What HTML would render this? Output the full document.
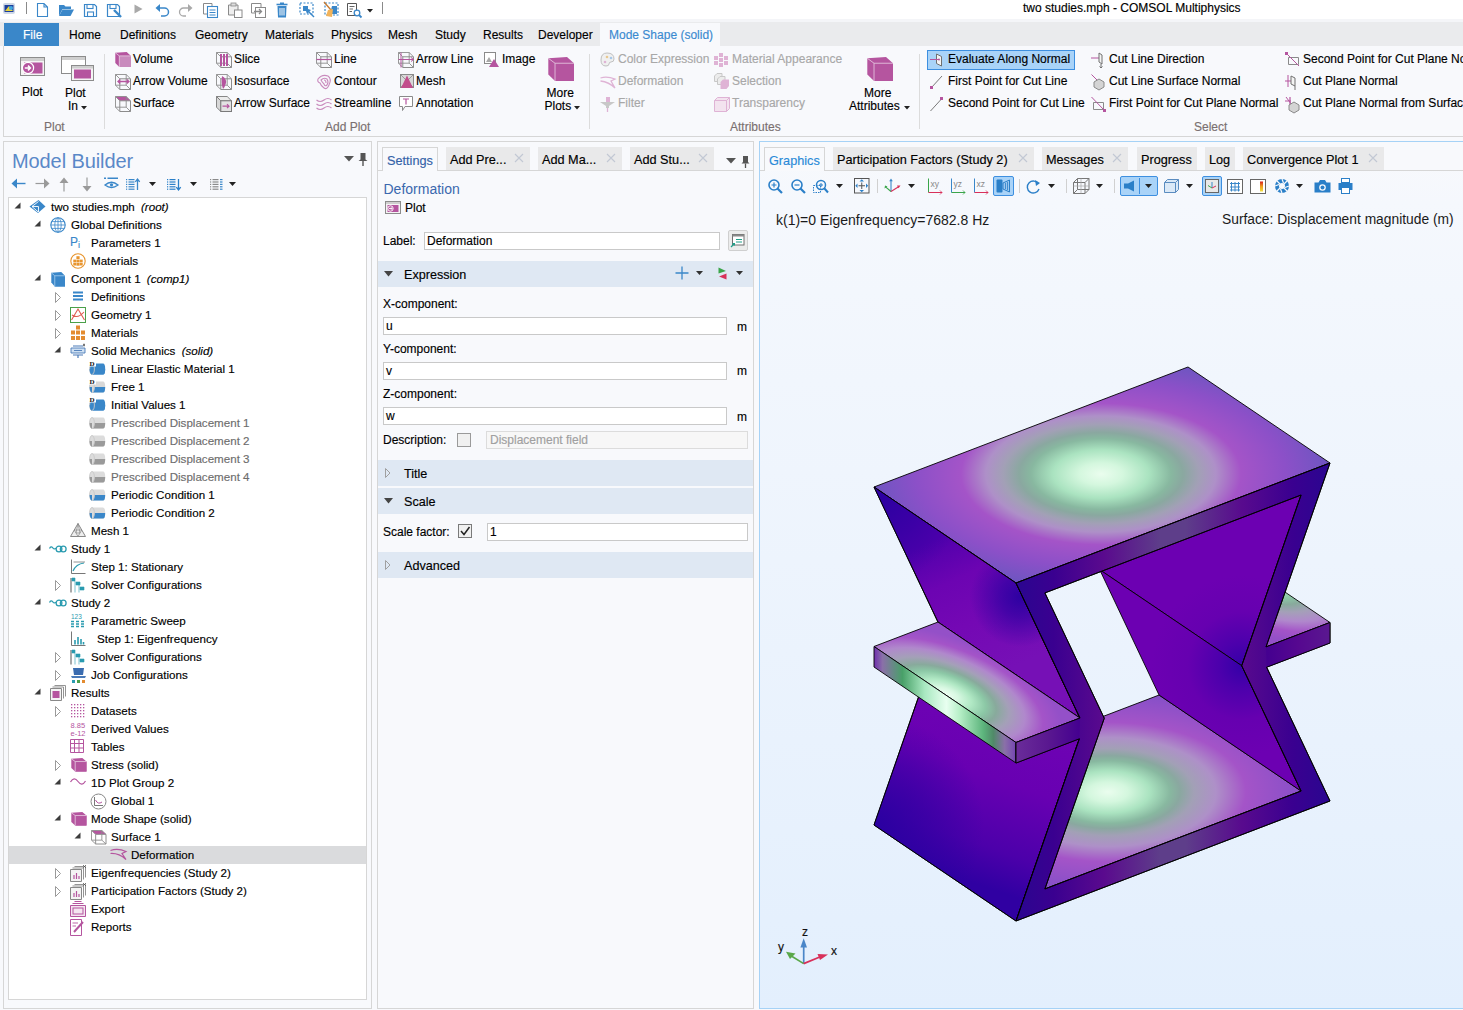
<!DOCTYPE html>
<html><head><meta charset="utf-8"><title>two studies.mph - COMSOL Multiphysics</title>
<style>
html,body{margin:0;padding:0;width:1463px;height:1010px;overflow:hidden;background:#f8f9fc;font-family:"Liberation Sans",sans-serif;font-size:12px;color:#000;}
.a{position:absolute;white-space:nowrap;line-height:1;-webkit-text-stroke:0.15px currentColor;}
svg.a{overflow:visible;}
</style></head><body>

<div class="a" style="left:0px;top:0px;width:1463px;height:19px;background:#ffffff"></div>
<svg class="a" style="left:2px;top:2px;" width="14" height="13" viewBox="0 0 14 13"><rect x="1" y="1" width="12" height="11" rx="2" fill="#cfd8e6"/><rect x="2.5" y="3" width="9" height="7" fill="#1c3f9c"/><path d="M3 9 L7 4 L11 9Z" fill="#e8d43a"/><circle cx="9" cy="6" r="2" fill="#3fa7e0"/></svg>
<div class="a" style="left:26px;top:2px;width:1px;height:12px;background:#8a8a8a"></div>
<svg class="a" style="left:36px;top:2px;" width="13" height="16" viewBox="0 0 13 16"><path d="M1.5 1.5 H8 L11.5 5 V14.5 H1.5Z M8 1.5 V5 H11.5" fill="none" stroke="#3a87c9" stroke-width="1.1"/></svg>
<svg class="a" style="left:58px;top:3px;" width="17" height="14" viewBox="0 0 17 14"><path d="M1 2 H6 L7.5 3.5 H13 V6 H4.5 L1 13Z" fill="#3a87c9"/><path d="M4.5 6.5 H16 L12.5 13 H1Z" fill="#3a87c9"/></svg>
<svg class="a" style="left:83px;top:3px;" width="15" height="15" viewBox="0 0 15 15"><path d="M1.5 1.5 H11.5 L13.5 3.5 V13.5 H1.5Z" fill="none" stroke="#3a87c9" stroke-width="1.2"/><rect x="4" y="1.5" width="6" height="4" fill="none" stroke="#3a87c9" stroke-width="1.1"/><rect x="4.5" y="9" width="6" height="4.5" fill="none" stroke="#3a87c9" stroke-width="1.1"/></svg>
<svg class="a" style="left:106px;top:3px;" width="17" height="16" viewBox="0 0 17 16"><path d="M1.5 1.5 H11.5 L13.5 3.5 V13.5 H1.5Z" fill="none" stroke="#3a87c9" stroke-width="1.2"/><rect x="4" y="1.5" width="6" height="4" fill="none" stroke="#3a87c9" stroke-width="1.1"/><path d="M8 7 L15 14" stroke="#3a87c9" stroke-width="2.4"/></svg>
<svg class="a" style="left:134px;top:4px;" width="9" height="10" viewBox="0 0 9 10"><path d="M0.5 0.5 L8.5 5 L0.5 9.5Z" fill="#a9a9a9"/></svg>
<svg class="a" style="left:155px;top:3px;" width="15" height="14" viewBox="0 0 15 14"><path d="M0.5 5 L5 1 V9Z" fill="#3a87c9"/><path d="M4 5 H9.5 A4 4 0 0 1 9.5 13 H6" fill="none" stroke="#3a87c9" stroke-width="1.5"/></svg>
<svg class="a" style="left:178px;top:3px;" width="15" height="14" viewBox="0 0 15 14"><path d="M14.5 5 L10 1 V9Z" fill="#a9a9a9"/><path d="M11 5 H5.5 A4 4 0 0 0 5.5 13 H8" fill="none" stroke="#a9a9a9" stroke-width="1.3"/></svg>
<svg class="a" style="left:202px;top:2px;" width="17" height="16" viewBox="0 0 17 16"><path d="M1.5 1.5 H10 V12 H1.5Z" fill="none" stroke="#8a8a8a" stroke-width="1"/><rect x="5.5" y="4.5" width="10" height="11" fill="#fff" stroke="#3a87c9" stroke-width="1.1"/><path d="M7.5 8 H13.5 M7.5 10.5 H13.5 M7.5 13 H13.5" stroke="#3a87c9" stroke-width="1"/></svg>
<svg class="a" style="left:227px;top:2px;" width="16" height="16" viewBox="0 0 16 16"><path d="M1.5 3 H11 V13 H1.5Z" fill="#eee" stroke="#8a8a8a" stroke-width="1"/><rect x="4" y="1" width="5" height="3" fill="#ddd" stroke="#8a8a8a" stroke-width="0.8"/><rect x="7.5" y="8" width="7.5" height="7.5" fill="#fff" stroke="#8a8a8a" stroke-width="1"/></svg>
<svg class="a" style="left:250px;top:2px;" width="17" height="16" viewBox="0 0 17 16"><path d="M1.5 1.5 H11 V11 H1.5Z" fill="none" stroke="#8a8a8a" stroke-width="1"/><rect x="5.5" y="5.5" width="10" height="10" fill="#fff" stroke="#8a8a8a" stroke-width="1"/><path d="M4 9.5 H11 M9 7 L11.5 9.5 L9 12" fill="none" stroke="#8a8a8a" stroke-width="1.3"/></svg>
<svg class="a" style="left:276px;top:2px;" width="12" height="16" viewBox="0 0 12 16"><path d="M0.5 2.5 H11.5" stroke="#3a87c9" stroke-width="1.6"/><rect x="4" y="0.5" width="4" height="2" fill="#3a87c9"/><path d="M1.5 4 H10.5 L10 15.5 H2Z" fill="#3a87c9"/><path d="M4 6 V13.5 M6 6 V13.5 M8 6 V13.5" stroke="#fff" stroke-width="1"/></svg>
<svg class="a" style="left:299px;top:2px;" width="16" height="16" viewBox="0 0 16 16"><rect x="1" y="1" width="13" height="11" fill="none" stroke="#3a87c9" stroke-width="1.2" stroke-dasharray="2,1.5"/><rect x="4" y="4" width="5" height="5" fill="#3a87c9"/><path d="M7 7 L15 15" stroke="#3a87c9" stroke-width="1.5"/><path d="M6 6 L12 8 L8 12Z" fill="#3a87c9"/></svg>
<svg class="a" style="left:323px;top:1px;" width="16" height="17" viewBox="0 0 16 17"><rect x="2" y="2" width="13" height="12" fill="none" stroke="#3a87c9" stroke-width="1.2" stroke-dasharray="2,1.5"/><path d="M9 5 H14 V13 H7Z" fill="#3a87c9"/><path d="M1 1 L8 9" stroke="#c87a30" stroke-width="1.3"/><path d="M5 9 L10 8 L9 16 L3 15Z" fill="#f2b35a"/></svg>
<svg class="a" style="left:346px;top:2px;" width="17" height="17" viewBox="0 0 17 17"><path d="M1.5 1.5 H10.5 V13.5 H1.5Z" fill="none" stroke="#555" stroke-width="1"/><path d="M3.5 4.5 H8.5 M3.5 7 H7 M3.5 9.5 H6" stroke="#555" stroke-width="0.9"/><circle cx="11" cy="11" r="2.8" fill="#fff" stroke="#3a87c9" stroke-width="1.3"/><path d="M13 13 L15.5 15.5" stroke="#3a87c9" stroke-width="1.8"/></svg>
<svg class="a" style="left:367px;top:9px;" width="6" height="4" viewBox="0 0 6 4"><path d="M0 0 H6 L3 3.5Z" fill="#222"/></svg>
<div class="a" style="left:382px;top:2px;width:1px;height:12px;background:#8a8a8a"></div>
<div class="a" style="left:1023px;top:2.14px;font-size:12px;color:#000;">two studies.mph - COMSOL Multiphysics</div>
<div class="a" style="left:0px;top:19px;width:1463px;height:3px;background:#f4f5f8"></div>
<div class="a" style="left:0px;top:22px;width:1463px;height:24px;background:#eaebed"></div>
<div class="a" style="left:4px;top:23px;width:55px;height:23px;background:#3a87c9"></div>
<div class="a" style="left:23px;top:29.44px;font-size:12px;color:#fff;">File</div>
<div class="a" style="left:69px;top:29.44px;font-size:12px;color:#000;">Home</div>
<div class="a" style="left:120px;top:29.44px;font-size:12px;color:#000;">Definitions</div>
<div class="a" style="left:195px;top:29.44px;font-size:12px;color:#000;">Geometry</div>
<div class="a" style="left:265px;top:29.44px;font-size:12px;color:#000;">Materials</div>
<div class="a" style="left:331px;top:29.44px;font-size:12px;color:#000;">Physics</div>
<div class="a" style="left:388px;top:29.44px;font-size:12px;color:#000;">Mesh</div>
<div class="a" style="left:435px;top:29.44px;font-size:12px;color:#000;">Study</div>
<div class="a" style="left:483px;top:29.44px;font-size:12px;color:#000;">Results</div>
<div class="a" style="left:538px;top:29.44px;font-size:12px;color:#000;">Developer</div>
<div class="a" style="left:600px;top:23px;width:120px;height:23px;background:#f8f9fc"></div>
<div class="a" style="left:609px;top:29.44px;font-size:12px;color:#3a8ad0;">Mode Shape (solid)</div>
<div class="a" style="left:3px;top:46px;width:1460px;height:90px;background:#f8f9fc;border-left:1px solid #d6d6d6;border-bottom:1px solid #d6d6d6;box-sizing:border-box;height:91px"></div>
<svg class="a" style="left:20px;top:57px;" width="26" height="21" viewBox="0 0 26 21"><rect x="0.5" y="0.5" width="24" height="18" fill="#f4f4f4" stroke="#8c8c8c" stroke-width="1"/><rect x="1" y="1" width="23" height="3" fill="#cfcfcf"/><rect x="4" y="5.5" width="18.5" height="11" fill="#b5559f"/><circle cx="8" cy="11" r="5.6" fill="#b5559f" stroke="#fff" stroke-width="1.2"/><path d="M4.8 11 H10.2 M8 8.6 L10.4 11 L8 13.4" fill="none" stroke="#fff" stroke-width="1.5"/></svg>
<div class="a" style="left:22px;top:86.44px;font-size:12px;color:#000;">Plot</div>
<svg class="a" style="left:61px;top:56px;" width="33" height="26" viewBox="0 0 33 26"><rect x="0.5" y="0.5" width="24" height="17" fill="#fff" stroke="#8c8c8c"/><rect x="1" y="1" width="23" height="3" fill="#cfcfcf"/><rect x="10.5" y="9.5" width="22" height="15" fill="#f4f4f4" stroke="#8c8c8c"/><rect x="11" y="10" width="21" height="2.5" fill="#cfcfcf"/><rect x="13" y="13.5" width="17" height="9" fill="#b5559f"/></svg>
<div class="a" style="left:65px;top:87.44px;font-size:12px;color:#000;">Plot</div>
<div class="a" style="left:68px;top:100.44px;font-size:12px;color:#000;">In</div>
<svg class="a" style="left:80.5px;top:106px;" width="6" height="4" viewBox="0 0 6 4"><path d="M0 0 H6 L3 3.5Z" fill="#222"/></svg>
<div class="a" style="left:44px;top:121.34px;font-size:12px;color:#7a7070;">Plot</div>
<div class="a" style="left:104px;top:54px;width:1px;height:75px;background:#dcdcdc"></div>
<svg class="a" style="left:115px;top:52px;" width="16" height="15" viewBox="0 0 16 15"><path d="M0.3 0.78 L11.68 0 L16.00 3.90 V15.00 H4.32 L0.3 10.90Z" fill="#b5559f"/><rect x="4.32" y="3.90" width="11.68" height="11.10" fill="#c98bbd"/><path d="M4.32 15.00 V3.90 H16.00 M4.32 3.90 L0.3 0.78" fill="none" stroke="#e9cfe3" stroke-width="0.8"/></svg>
<div class="a" style="left:133px;top:52.64px;font-size:12px;color:#000;">Volume</div>
<svg class="a" style="left:115px;top:74px;" width="16" height="16" viewBox="0 0 16 16"><path d="M4.80 4.80 H15.50 V15.50 H4.80Z" fill="none" stroke="#8c8c8c" stroke-width="1"/><path d="M0.5 0.5 H11.20 V11.20 H0.5Z M0.5 0.5 L4.80 4.80 M11.20 0.5 L15.50 4.80 M0.5 11.20 L4.80 15.50 M11.20 11.20 L15.50 15.50" fill="none" stroke="#8c8c8c" stroke-width="0.9"/><path d="M3 7.5 H14 M5.2 5.5 L3 7.5 L5.2 9.5 M11.8 5.5 L14 7.5 L11.8 9.5" fill="none" stroke="#b5559f" stroke-width="1.3"/></svg>
<div class="a" style="left:133px;top:74.64px;font-size:12px;color:#000;">Arrow Volume</div>
<svg class="a" style="left:115px;top:96px;" width="16" height="16" viewBox="0 0 16 16"><path d="M0.5 0.5 H11.20 L15.50 4.80 H4.80Z" fill="#b5559f"/><path d="M4.80 4.80 H15.50 V15.50 H4.80Z" fill="none" stroke="#8c8c8c" stroke-width="1"/><path d="M0.5 0.5 H11.20 V11.20 H0.5Z M0.5 0.5 L4.80 4.80 M11.20 0.5 L15.50 4.80 M0.5 11.20 L4.80 15.50 M11.20 11.20 L15.50 15.50" fill="none" stroke="#8c8c8c" stroke-width="0.9"/></svg>
<div class="a" style="left:133px;top:96.64px;font-size:12px;color:#000;">Surface</div>
<svg class="a" style="left:216px;top:52px;" width="16" height="16" viewBox="0 0 16 16"><path d="M4.80 4.80 H15.50 V15.50 H4.80Z" fill="none" stroke="#8c8c8c" stroke-width="1"/><path d="M0.5 0.5 H11.20 V11.20 H0.5Z M0.5 0.5 L4.80 4.80 M11.20 0.5 L15.50 4.80 M0.5 11.20 L4.80 15.50 M11.20 11.20 L15.50 15.50" fill="none" stroke="#8c8c8c" stroke-width="0.9"/><path d="M5 2 V14 M8 2 V14 M11 2 V14" stroke="#b5559f" stroke-width="2"/></svg>
<div class="a" style="left:234px;top:52.64px;font-size:12px;color:#000;">Slice</div>
<svg class="a" style="left:216px;top:74px;" width="16" height="16" viewBox="0 0 16 16"><path d="M4.80 4.80 H15.50 V15.50 H4.80Z" fill="none" stroke="#8c8c8c" stroke-width="1"/><path d="M0.5 0.5 H11.20 V11.20 H0.5Z M0.5 0.5 L4.80 4.80 M11.20 0.5 L15.50 4.80 M0.5 11.20 L4.80 15.50 M11.20 11.20 L15.50 15.50" fill="none" stroke="#8c8c8c" stroke-width="0.9"/><path d="M6 2 Q11 5 10 9 Q9 13 7 15 Q5 10 6 2Z" fill="#b5559f"/></svg>
<div class="a" style="left:234px;top:74.64px;font-size:12px;color:#000;">Isosurface</div>
<svg class="a" style="left:216px;top:96px;" width="16" height="16" viewBox="0 0 16 16"><path d="M0.5 0.5 H11.2 L15.5 4.8 H4.8Z" fill="#ececec" stroke="#7a7a7a" stroke-width="0.9"/><path d="M0.5 0.5 V11.2 L4.8 15.5 V4.8Z" fill="#d8d8d8" stroke="#7a7a7a" stroke-width="0.9"/><rect x="4.8" y="4.8" width="10.7" height="10.7" fill="#e2e2e2" stroke="#7a7a7a" stroke-width="1"/><path d="M6.5 10.2 H13 M11 8.2 L13 10.2 L11 12.2" fill="none" stroke="#b5559f" stroke-width="1.2"/></svg>
<div class="a" style="left:234px;top:96.64px;font-size:12px;color:#000;">Arrow Surface</div>
<svg class="a" style="left:316px;top:52px;" width="16" height="16" viewBox="0 0 16 16"><path d="M4.80 4.80 H15.50 V15.50 H4.80Z" fill="none" stroke="#8c8c8c" stroke-width="1"/><path d="M0.5 0.5 H11.20 V11.20 H0.5Z M0.5 0.5 L4.80 4.80 M11.20 0.5 L15.50 4.80 M0.5 11.20 L4.80 15.50 M11.20 11.20 L15.50 15.50" fill="none" stroke="#8c8c8c" stroke-width="0.9"/><path d="M0.5 7.5 H15.5" stroke="#b5559f" stroke-width="1.2"/></svg>
<div class="a" style="left:334px;top:52.64px;font-size:12px;color:#000;">Line</div>
<svg class="a" style="left:316px;top:74px;" width="16" height="16" viewBox="0 0 16 16"><path d="M2 5 Q6 0 12 2 Q16 5 13 11 Q11 16 8 14 Q5 12 4 9 Q1 8 2 5Z M5 6 Q8 3 11 5 Q13 8 11 11 Q9 13 8 10 Q6 8 5 6Z M8 6 Q10 6 10 9" fill="none" stroke="#c98bbd" stroke-width="1.1"/></svg>
<div class="a" style="left:334px;top:74.64px;font-size:12px;color:#000;">Contour</div>
<svg class="a" style="left:316px;top:97px;" width="16" height="14" viewBox="0 0 16 14"><path d="M0.5 3 Q4 6 8 3 T15.5 3 M0.5 7 Q4 10 8 7 T15.5 7 M0.5 11 Q4 14 8 11 T15.5 11" fill="none" stroke="#c98bbd" stroke-width="1.1"/></svg>
<div class="a" style="left:334px;top:96.64px;font-size:12px;color:#000;">Streamline</div>
<div class="a" style="left:325px;top:121.34px;font-size:12px;color:#7a7070;">Add Plot</div>
<svg class="a" style="left:398px;top:52px;" width="16" height="16" viewBox="0 0 16 16"><path d="M4.80 4.80 H15.50 V15.50 H4.80Z" fill="none" stroke="#8c8c8c" stroke-width="1"/><path d="M0.5 0.5 H11.20 V11.20 H0.5Z M0.5 0.5 L4.80 4.80 M11.20 0.5 L15.50 4.80 M0.5 11.20 L4.80 15.50 M11.20 11.20 L15.50 15.50" fill="none" stroke="#8c8c8c" stroke-width="0.9"/><path d="M0.5 7.5 H15.5 M13 5.5 L15.5 7.5 L13 9.5 M3 0.5 V15.5" fill="none" stroke="#b5559f" stroke-width="1"/></svg>
<div class="a" style="left:416px;top:52.64px;font-size:12px;color:#000;">Arrow Line</div>
<svg class="a" style="left:400px;top:74px;" width="14" height="15" viewBox="0 0 14 15"><rect x="0.5" y="0.5" width="13" height="13" fill="#d8d8d8" stroke="#8a8a8a"/><path d="M0.5 0.5 L13.5 13.5 M13.5 0.5 L0.5 13.5" stroke="#8a8a8a" stroke-width="0.8"/><path d="M7 1.5 L13 14 H1Z" fill="#c24d8c"/></svg>
<div class="a" style="left:416px;top:74.64px;font-size:12px;color:#000;">Mesh</div>
<svg class="a" style="left:399px;top:96px;" width="14" height="16" viewBox="0 0 14 16"><path d="M0.5 0.5 H13.5 V10.5 H6 L3.5 14.5 V10.5 H0.5Z" fill="#fff" stroke="#8a8a8a"/><path d="M4 3 H10 M7 3 V8.5" stroke="#b5559f" stroke-width="1.2"/></svg>
<div class="a" style="left:416px;top:96.64px;font-size:12px;color:#000;">Annotation</div>
<svg class="a" style="left:484px;top:52px;" width="16" height="16" viewBox="0 0 16 16"><rect x="0.5" y="0.5" width="11" height="11" fill="#fff" stroke="#8a8a8a"/><path d="M2 10 L5 5 L8 10Z" fill="#a8a8a8"/><path d="M10 7 L15 15 H5Z" fill="#b5559f"/></svg>
<div class="a" style="left:502px;top:52.64px;font-size:12px;color:#000;">Image</div>
<svg class="a" style="left:548px;top:57px;" width="26" height="24" viewBox="0 0 26 24"><path d="M0.3 1.25 L18.98 0 L26.00 6.24 V24.00 H7.02 L0.3 17.45Z" fill="#b5559f"/><rect x="7.02" y="6.24" width="18.98" height="17.76" fill="#b5559f"/><path d="M7.02 24.00 V6.24 H26.00 M7.02 6.24 L0.3 1.25" fill="none" stroke="#e9cfe3" stroke-width="0.8"/></svg>
<div class="a" style="left:546.5px;top:87.24px;font-size:12px;color:#000;">More</div>
<div class="a" style="left:544.5px;top:100.24px;font-size:12px;color:#000;">Plots</div>
<svg class="a" style="left:574px;top:106px;" width="6" height="4" viewBox="0 0 6 4"><path d="M0 0 H6 L3 3.5Z" fill="#222"/></svg>
<div class="a" style="left:589px;top:54px;width:1px;height:75px;background:#dcdcdc"></div>
<svg class="a" style="left:600px;top:52px;" width="15" height="15" viewBox="0 0 15 15"><path d="M7 1 Q14 1 14 7 Q14 10 11 10 Q9 10 9 12 Q9 14 6 14 Q1 14 1 8 Q1 1 7 1Z" fill="#f0f0f0" stroke="#c0c0c0"/><circle cx="5" cy="10" r="1.3" fill="#dfb3d5"/><circle cx="11" cy="6" r="1.3" fill="#a8c8e8"/><circle cx="7" cy="5" r="1.3" fill="#e8c890"/></svg>
<div class="a" style="left:618px;top:52.64px;font-size:12px;color:#a8a8a8;">Color Expression</div>
<svg class="a" style="left:600px;top:75px;" width="16" height="14" viewBox="0 0 16 14"><path d="M0.5 3 Q7 1 15 4 L11 6 L15 13 Q9 7 0.5 6" fill="none" stroke="#dfb3d5" stroke-width="1.3"/></svg>
<div class="a" style="left:618px;top:74.64px;font-size:12px;color:#a8a8a8;">Deformation</div>
<svg class="a" style="left:600px;top:96px;" width="15" height="17" viewBox="0 0 15 17"><path d="M0 6 H15 L9 10 V12 H6 V10Z" fill="#c8c8c8"/><rect x="6" y="1" width="4" height="5" fill="#dfb3d5"/><path d="M7.5 12 V16" stroke="#dfb3d5" stroke-width="1.3"/></svg>
<div class="a" style="left:618px;top:96.64px;font-size:12px;color:#a8a8a8;">Filter</div>
<svg class="a" style="left:714px;top:52px;" width="16" height="15" viewBox="0 0 16 15"><g fill="#dfb3d5"><rect x="0" y="4" width="4" height="4"/><rect x="5" y="1" width="4" height="4"/><rect x="10" y="4" width="4" height="4"/><rect x="5" y="6" width="4" height="4"/><rect x="0" y="9" width="4" height="4"/><rect x="10" y="9" width="4" height="4"/><rect x="5" y="11" width="4" height="4"/></g></svg>
<div class="a" style="left:732px;top:52.64px;font-size:12px;color:#a8a8a8;">Material Appearance</div>
<svg class="a" style="left:714px;top:73px;" width="16" height="18" viewBox="0 0 16 18"><path d="M0.5 3 L3 0.5 H8 V6 L5.5 8.5 H0.5Z" fill="#ececec" stroke="#c8c8c8"/><path d="M3.5 6 L6 3.5 H11 V9 L8.5 11.5 H3.5Z" fill="#ececec" stroke="#c8c8c8"/><path d="M6.5 9 L9 6.5 H15 V13 L12.5 16 H6.5Z" fill="#dfb3d5"/></svg>
<div class="a" style="left:732px;top:74.64px;font-size:12px;color:#a8a8a8;">Selection</div>
<svg class="a" style="left:714px;top:97px;" width="16" height="15" viewBox="0 0 16 15"><path d="M0.5 3.5 L3.5 0.5 H15.5 V11.5 L12.5 14.5 H0.5Z M0.5 3.5 H12.5 V14.5 M12.5 3.5 L15.5 0.5" fill="#f3e3ef" stroke="#dfb3d5" stroke-width="1"/></svg>
<div class="a" style="left:732px;top:96.64px;font-size:12px;color:#a8a8a8;">Transparency</div>
<svg class="a" style="left:867px;top:57px;" width="26" height="24" viewBox="0 0 26 24"><path d="M0.3 1.25 L18.98 0 L26.00 6.24 V24.00 H7.02 L0.3 17.45Z" fill="#b5559f"/><rect x="7.02" y="6.24" width="18.98" height="17.76" fill="#b5559f"/><path d="M7.02 24.00 V6.24 H26.00 M7.02 6.24 L0.3 1.25" fill="none" stroke="#e9cfe3" stroke-width="0.8"/></svg>
<div class="a" style="left:864px;top:87.24px;font-size:12px;color:#000;">More</div>
<div class="a" style="left:849px;top:100.24px;font-size:12px;color:#000;">Attributes</div>
<svg class="a" style="left:904px;top:106px;" width="6" height="4" viewBox="0 0 6 4"><path d="M0 0 H6 L3 3.5Z" fill="#222"/></svg>
<div class="a" style="left:730px;top:121.34px;font-size:12px;color:#7a7070;">Attributes</div>
<div class="a" style="left:919px;top:54px;width:1px;height:75px;background:#dcdcdc"></div>
<div class="a" style="left:927px;top:50px;width:148px;height:20px;background:#a9d3f8;border:1px solid #3d8fe0;box-sizing:border-box"></div>
<svg class="a" style="left:930px;top:52px;" width="13" height="16" viewBox="0 0 13 16"><path d="M6.5 2 L11.5 4.5 V14 L6.5 11.5Z" fill="#f4f4f4" stroke="#707070" stroke-width="1"/><path d="M0 7.5 H9" stroke="#b5559f" stroke-width="1"/><circle cx="9" cy="7.5" r="1" fill="#b5559f"/></svg>
<div class="a" style="left:948px;top:52.64px;font-size:12px;color:#000;">Evaluate Along Normal</div>
<svg class="a" style="left:930px;top:74px;" width="13" height="16" viewBox="0 0 13 16"><path d="M1.5 13.5 L12 2" stroke="#7a7a7a" stroke-width="1"/><rect x="0" y="12" width="3" height="3" fill="#b5559f"/></svg>
<div class="a" style="left:948px;top:74.64px;font-size:12px;color:#000;">First Point for Cut Line</div>
<svg class="a" style="left:930px;top:96px;" width="13" height="16" viewBox="0 0 13 16"><path d="M0.5 15 L11 3.5" stroke="#7a7a7a" stroke-width="1"/><rect x="10" y="1" width="3" height="3" fill="#b5559f"/></svg>
<div class="a" style="left:948px;top:96.64px;font-size:12px;color:#000;">Second Point for Cut Line</div>
<svg class="a" style="left:1091px;top:52px;" width="15" height="17" viewBox="0 0 15 17"><path d="M0 6 H10" stroke="#b5559f" stroke-width="1"/><path d="M8 1 L11 3 V12 L8 10Z" fill="#f4f4f4" stroke="#707070"/><path d="M10 12 V16 M8.5 14.5 L10 16 L11.5 14.5" fill="none" stroke="#707070"/></svg>
<div class="a" style="left:1109px;top:52.64px;font-size:12px;color:#000;">Cut Line Direction</div>
<svg class="a" style="left:1091px;top:74px;" width="15" height="17" viewBox="0 0 15 17"><path d="M0.5 0.5 L7 7" stroke="#b5559f" stroke-width="1"/><path d="M8 5 L13 8 V13 L8 16 L3 13 V8Z" fill="#d4d4d4" stroke="#8a8a8a"/></svg>
<div class="a" style="left:1109px;top:74.64px;font-size:12px;color:#000;">Cut Line Surface Normal</div>
<svg class="a" style="left:1091px;top:96px;" width="15" height="16" viewBox="0 0 15 16"><path d="M2.5 6.5 H12.5 V13.5 H2.5Z" fill="none" stroke="#8a8a8a"/><path d="M0.5 1 L13 14" stroke="#b5559f" stroke-width="1"/><rect x="12" y="13" width="3" height="3" fill="#b5559f"/></svg>
<div class="a" style="left:1109px;top:96.64px;font-size:12px;color:#000;">First Point for Cut Plane Normal</div>
<svg class="a" style="left:1285px;top:52px;" width="16" height="16" viewBox="0 0 16 16"><path d="M3.5 5.5 H13.5 V12.5 H3.5Z" fill="none" stroke="#8a8a8a"/><path d="M1 1 L14 14" stroke="#b5559f" stroke-width="1"/><rect x="0" y="0" width="3" height="3" fill="#b5559f"/></svg>
<div class="a" style="left:1303px;top:52.64px;font-size:12px;color:#000;">Second Point for Cut Plane Normal</div>
<svg class="a" style="left:1285px;top:74px;" width="15" height="17" viewBox="0 0 15 17"><path d="M0 7 H10 M3 1 V13" stroke="#b5559f" stroke-width="1"/><path d="M6 2 L10 4 V12 L6 10Z" fill="#f4f4f4" stroke="#707070"/><path d="M10 12 V16" stroke="#707070"/></svg>
<div class="a" style="left:1303px;top:74.64px;font-size:12px;color:#000;">Cut Plane Normal</div>
<svg class="a" style="left:1285px;top:96px;" width="15" height="17" viewBox="0 0 15 17"><path d="M5 1 V10 M0 5 H6" stroke="#b5559f" stroke-width="1.2"/><path d="M1 1 L7 9" stroke="#b5559f" stroke-width="1"/><path d="M9 6 L14 9 V14 L9 17 L4 14 V9Z" fill="#d4d4d4" stroke="#8a8a8a"/></svg>
<div class="a" style="left:1303px;top:96.64px;font-size:12px;color:#000;">Cut Plane Normal from Surface</div>
<div class="a" style="left:1194px;top:121.34px;font-size:12px;color:#7a7070;">Select</div>
<div class="a" style="left:3px;top:141px;width:369px;height:868px;background:#f8f9fc;border:1px solid #d6d6d6;box-sizing:border-box"></div>
<div class="a" style="left:12px;top:151.07px;font-size:20px;color:#5a88c8;letter-spacing:-0.1px;-webkit-text-stroke:0;">Model Builder</div>
<svg class="a" style="left:344px;top:156px;" width="10" height="6" viewBox="0 0 10 6"><path d="M0 0 H10 L5 5.5Z" fill="#555"/></svg>
<svg class="a" style="left:358px;top:153px;" width="10" height="13" viewBox="0 0 10 13"><path d="M2.5 0 H7.5 V6.5 L9.5 8 H0.5 L2.5 6.5Z" fill="#555"/><path d="M5 8 V13" stroke="#555" stroke-width="1.4"/></svg>
<svg class="a" style="left:11px;top:178px;" width="15" height="11" viewBox="0 0 15 11"><path d="M0.5 5.5 L6 0.5 V10.5Z" fill="#3a87c9"/><path d="M4 5.5 H14.5" stroke="#3a87c9" stroke-width="1.4"/></svg>
<svg class="a" style="left:35px;top:178px;" width="15" height="11" viewBox="0 0 15 11"><path d="M14.5 5.5 L9 0.5 V10.5Z" fill="#9a9a9a"/><path d="M0.5 5.5 H11" stroke="#9a9a9a" stroke-width="1.2"/></svg>
<svg class="a" style="left:59px;top:177px;" width="10" height="15" viewBox="0 0 10 15"><path d="M5 0.5 L0.5 6 H9.5Z" fill="#9a9a9a"/><path d="M5 4 V14.5" stroke="#9a9a9a" stroke-width="1.2"/></svg>
<svg class="a" style="left:82px;top:177px;" width="10" height="15" viewBox="0 0 10 15"><path d="M5 14.5 L0.5 9 H9.5Z" fill="#9a9a9a"/><path d="M5 0.5 V11" stroke="#9a9a9a" stroke-width="1.2"/></svg>
<svg class="a" style="left:104px;top:177px;" width="15" height="13" viewBox="0 0 15 13"><path d="M0 1.2 H2 M3.5 1.2 H14" stroke="#3a87c9" stroke-width="1.6"/><path d="M1 8 Q7.5 2.5 14 8 Q7.5 13 1 8Z" fill="none" stroke="#3a87c9" stroke-width="1.3"/><circle cx="7.5" cy="7.8" r="1.6" fill="#3a87c9"/></svg>
<svg class="a" style="left:126px;top:178px;" width="15" height="13" viewBox="0 0 15 13"><rect x="0" y="1.0" width="1.2" height="1.2" fill="#3a87c9"/><rect x="0" y="3.4" width="1.2" height="1.2" fill="#3a87c9"/><rect x="0" y="5.8" width="1.2" height="1.2" fill="#3a87c9"/><rect x="0" y="8.2" width="1.2" height="1.2" fill="#3a87c9"/><rect x="0" y="10.6" width="1.2" height="1.2" fill="#3a87c9"/><path d="M2.5 1.6 H8.5" stroke="#3a87c9" stroke-width="1.2"/><path d="M2.5 4.0 H8.5" stroke="#3a87c9" stroke-width="1.2"/><path d="M2.5 6.4 H8.5" stroke="#3a87c9" stroke-width="1.2"/><path d="M2.5 8.8 H8.5" stroke="#3a87c9" stroke-width="1.2"/><path d="M2.5 11.2 H8.5" stroke="#3a87c9" stroke-width="1.2"/><path d="M11.5 12 V1.5 M9.3 3.8 L11.5 1 L13.7 3.8" fill="none" stroke="#3a87c9" stroke-width="1.3"/></svg>
<svg class="a" style="left:148.5px;top:182px;" width="7" height="5" viewBox="0 0 7 5"><path d="M0 0 H7 L3.5 4Z" fill="#222"/></svg>
<svg class="a" style="left:167px;top:178px;" width="15" height="13" viewBox="0 0 15 13"><rect x="0" y="1.0" width="1.2" height="1.2" fill="#2a7fc8"/><rect x="0" y="3.4" width="1.2" height="1.2" fill="#2a7fc8"/><rect x="0" y="5.8" width="1.2" height="1.2" fill="#2a7fc8"/><rect x="0" y="8.2" width="1.2" height="1.2" fill="#2a7fc8"/><rect x="0" y="10.6" width="1.2" height="1.2" fill="#2a7fc8"/><path d="M2.5 1.6 H8.5" stroke="#2a7fc8" stroke-width="1.2"/><path d="M2.5 4.0 H8.5" stroke="#2a7fc8" stroke-width="1.2"/><path d="M2.5 6.4 H8.5" stroke="#2a7fc8" stroke-width="1.2"/><path d="M2.5 8.8 H8.5" stroke="#2a7fc8" stroke-width="1.2"/><path d="M2.5 11.2 H8.5" stroke="#2a7fc8" stroke-width="1.2"/><path d="M11.5 1 V11.5 M9.3 9.2 L11.5 12 L13.7 9.2" fill="none" stroke="#2a7fc8" stroke-width="1.3"/></svg>
<svg class="a" style="left:189.5px;top:182px;" width="7" height="5" viewBox="0 0 7 5"><path d="M0 0 H7 L3.5 4Z" fill="#222"/></svg>
<svg class="a" style="left:210px;top:178px;" width="15" height="13" viewBox="0 0 15 13"><rect x="0" y="1.0" width="1.2" height="1.2" fill="#8a8a8a"/><rect x="0" y="3.4" width="1.2" height="1.2" fill="#8a8a8a"/><rect x="0" y="5.8" width="1.2" height="1.2" fill="#8a8a8a"/><rect x="0" y="8.2" width="1.2" height="1.2" fill="#8a8a8a"/><rect x="0" y="10.6" width="1.2" height="1.2" fill="#8a8a8a"/><path d="M2.5 1.6 H8.5" stroke="#8a8a8a" stroke-width="1.2"/><path d="M2.5 4.0 H8.5" stroke="#8a8a8a" stroke-width="1.2"/><path d="M2.5 6.4 H8.5" stroke="#8a8a8a" stroke-width="1.2"/><path d="M2.5 8.8 H8.5" stroke="#8a8a8a" stroke-width="1.2"/><path d="M2.5 11.2 H8.5" stroke="#8a8a8a" stroke-width="1.2"/><rect x="10" y="1.0" width="2.5" height="1.2" fill="#3a87c9"/><rect x="10" y="3.4" width="2.5" height="1.2" fill="#3a87c9"/><rect x="10" y="5.8" width="2.5" height="1.2" fill="#3a87c9"/><rect x="10" y="8.2" width="2.5" height="1.2" fill="#3a87c9"/><rect x="10" y="10.6" width="2.5" height="1.2" fill="#3a87c9"/></svg>
<svg class="a" style="left:229px;top:182px;" width="7" height="5" viewBox="0 0 7 5"><path d="M0 0 H7 L3.5 4Z" fill="#222"/></svg>
<div class="a" style="left:8px;top:197px;width:359px;height:803px;background:#ffffff;border:1px solid #d6d6d6;box-sizing:border-box"></div>
<div class="a" style="left:9px;top:846px;width:357px;height:18px;background:#dadbdd"></div>
<svg class="a" style="left:14px;top:202px;" width="7" height="7" viewBox="0 0 7 7"><path d="M6.5 0.5 V6.5 H0.5Z" fill="#3c3c3c"/></svg>
<svg class="a" style="left:30px;top:199px;" width="16" height="15" viewBox="0 0 16 15"><path d="M-0.5 7.5 L8.5 1 L15.5 7.5 L8 14Z" fill="#3a87c9"/><path d="M8.5 2.5 L2 7.5 L8 12.8 M2 7.5 H8.5 V13" fill="none" stroke="#fff" stroke-width="0.9"/></svg>
<div class="a" style="left:51px;top:200.68px;font-size:11.6px;color:#000;">two studies.mph<span style="font-style:italic;margin-left:3px"> (root)</span></div>
<svg class="a" style="left:34px;top:220px;" width="7" height="7" viewBox="0 0 7 7"><path d="M6.5 0.5 V6.5 H0.5Z" fill="#3c3c3c"/></svg>
<svg class="a" style="left:50px;top:217px;" width="16" height="16" viewBox="0 0 16 16"><circle cx="8" cy="8" r="7.2" fill="none" stroke="#3a87c9" stroke-width="1.1"/><ellipse cx="8" cy="8" rx="3.2" ry="7.2" fill="none" stroke="#3a87c9" stroke-width="0.8"/><path d="M0.8 8 H15.2 M1.8 4.6 H14.2 M1.8 11.4 H14.2 M8 0.8 V15.2" stroke="#3a87c9" stroke-width="0.8"/></svg>
<div class="a" style="left:71px;top:218.68px;font-size:11.6px;color:#000;">Global Definitions</div>
<div class="a" style="left:70px;top:236.34px;font-size:12px;color:#3a87c9;">P</div>
<div class="a" style="left:78px;top:240.88px;font-size:9px;color:#3a87c9;">i</div>
<div class="a" style="left:91px;top:236.68px;font-size:11.6px;color:#000;">Parameters 1</div>
<svg class="a" style="left:70px;top:253px;" width="16" height="16" viewBox="0 0 16 16"><circle cx="8" cy="8" r="7.2" fill="#fff" stroke="#e8952e" stroke-width="1.1"/><g fill="#e8952e"><rect x="6.4" y="3.2" width="3.2" height="2.8"/><rect x="3.3" y="6.6" width="2.8" height="2.8"/><rect x="6.4" y="6.6" width="3.2" height="2.8"/><rect x="9.9" y="6.6" width="2.8" height="2.8"/><rect x="3.3" y="9.9" width="2.8" height="2.6"/><rect x="6.4" y="9.9" width="3.2" height="2.8"/><rect x="9.9" y="9.9" width="2.8" height="2.6"/></g></svg>
<div class="a" style="left:91px;top:254.68px;font-size:11.6px;color:#000;">Materials</div>
<svg class="a" style="left:34px;top:274px;" width="7" height="7" viewBox="0 0 7 7"><path d="M6.5 0.5 V6.5 H0.5Z" fill="#3c3c3c"/></svg>
<svg class="a" style="left:50.5px;top:271.5px;" width="15" height="15" viewBox="0 0 15 15"><path d="M0.3 0.75 L10.22 0 L14.00 3.77 V14.50 H3.78 L0.3 10.54Z" fill="#3a87c9"/><rect x="3.78" y="3.77" width="10.22" height="10.73" fill="#3a87c9"/><path d="M3.78 14.50 V3.77 H14.00 M3.78 3.77 L0.3 0.75" fill="none" stroke="#a9d0f0" stroke-width="0.8"/></svg>
<div class="a" style="left:71px;top:272.68px;font-size:11.6px;color:#000;">Component 1<span style="font-style:italic;margin-left:3px"> (comp1)</span></div>
<svg class="a" style="left:55px;top:291.5px;" width="6" height="11" viewBox="0 0 6 11"><path d="M0.5 0.5 L5.5 5.5 L0.5 10.5Z" fill="#fff" stroke="#9a9a9a" stroke-width="1"/></svg>
<svg class="a" style="left:70px;top:289px;" width="16" height="14" viewBox="0 0 16 14"><path d="M3 3.5 H13 M3 7 H13 M3 10.5 H13" stroke="#3a87c9" stroke-width="2"/></svg>
<div class="a" style="left:91px;top:290.68px;font-size:11.6px;color:#000;">Definitions</div>
<svg class="a" style="left:55px;top:309.5px;" width="6" height="11" viewBox="0 0 6 11"><path d="M0.5 0.5 L5.5 5.5 L0.5 10.5Z" fill="#fff" stroke="#9a9a9a" stroke-width="1"/></svg>
<svg class="a" style="left:70px;top:307px;" width="16" height="16" viewBox="0 0 16 16"><rect x="0.5" y="0.5" width="15" height="15" fill="#fff" stroke="#4aa04a" stroke-width="1"/><path d="M1.5 13 L8 2 L14.5 13 M2 8 Q8 12 14 5" fill="none" stroke="#e05a50" stroke-width="1.1"/></svg>
<div class="a" style="left:91px;top:308.68px;font-size:11.6px;color:#000;">Geometry 1</div>
<svg class="a" style="left:55px;top:327.5px;" width="6" height="11" viewBox="0 0 6 11"><path d="M0.5 0.5 L5.5 5.5 L0.5 10.5Z" fill="#fff" stroke="#9a9a9a" stroke-width="1"/></svg>
<svg class="a" style="left:70px;top:325px;" width="16" height="16" viewBox="0 0 16 16"><g fill="#e38b30"><rect x="6" y="0.5" width="4" height="4"/><rect x="1" y="5.5" width="4" height="4"/><rect x="6" y="5.5" width="4" height="4"/><rect x="11" y="5.5" width="4" height="4"/><rect x="1" y="11" width="4" height="4"/><rect x="6" y="11" width="4" height="4"/><rect x="11" y="11" width="4" height="4"/></g></svg>
<div class="a" style="left:91px;top:326.68px;font-size:11.6px;color:#000;">Materials</div>
<svg class="a" style="left:54px;top:346px;" width="7" height="7" viewBox="0 0 7 7"><path d="M6.5 0.5 V6.5 H0.5Z" fill="#3c3c3c"/></svg>
<svg class="a" style="left:70px;top:343px;" width="17" height="16" viewBox="0 0 17 16"><path d="M1 5 H15 V10 H1Z" fill="#cfe0f2" stroke="#4a7ab8" stroke-width="0.9"/><path d="M3 3 H13 M3 12 H13 M8 12 V15" stroke="#4a7ab8" stroke-width="1.2"/><path d="M4 7.5 H12" stroke="#4a7ab8" stroke-width="0.9"/><path d="M13 1 L15 3 M15 1 L13 3 M14 0.5 V3.5" stroke="#666" stroke-width="0.8"/></svg>
<div class="a" style="left:91px;top:344.68px;font-size:11.6px;color:#000;">Solid Mechanics<span style="font-style:italic;margin-left:3px"> (solid)</span></div>
<svg class="a" style="left:88.5px;top:361px;" width="17" height="16" viewBox="0 0 17 16"><path d="M3 2.5 H14 Q16.2 2.5 16.2 8 Q16.2 13.5 14 13.5 H3Z" fill="#3a87c9"/><path d="M3 8 H16.2 Q16.2 13.5 14 13.5 H3Z" fill="#3a87c9"/><ellipse cx="3" cy="8" rx="2.4" ry="5.5" fill="#3a87c9" stroke="#c8c8c8" stroke-width="0.9"/><path d="M3 8 V13.5 A2.4 5.5 0 0 1 0.6 8Z" fill="#3a87c9"/><rect x="0" y="-0.5" width="7" height="6" fill="#fff"/><text x="0.6" y="5.2" font-size="7" font-family="Liberation Serif" font-weight="bold" fill="#111">D</text></svg>
<div class="a" style="left:111px;top:362.68px;font-size:11.6px;color:#000;">Linear Elastic Material 1</div>
<svg class="a" style="left:88.5px;top:379px;" width="17" height="16" viewBox="0 0 17 16"><path d="M3 2.5 H14 Q16.2 2.5 16.2 8 Q16.2 13.5 14 13.5 H3Z" fill="#d8d8d8"/><path d="M3 8 H16.2 Q16.2 13.5 14 13.5 H3Z" fill="#3a87c9"/><ellipse cx="3" cy="8" rx="2.4" ry="5.5" fill="#d8d8d8" stroke="#c8c8c8" stroke-width="0.9"/><path d="M3 8 V13.5 A2.4 5.5 0 0 1 0.6 8Z" fill="#3a87c9"/><rect x="0" y="-0.5" width="7" height="6" fill="#fff"/><text x="0.6" y="5.2" font-size="7" font-family="Liberation Serif" font-weight="bold" fill="#111">D</text></svg>
<div class="a" style="left:111px;top:380.68px;font-size:11.6px;color:#000;">Free 1</div>
<svg class="a" style="left:88.5px;top:397px;" width="17" height="16" viewBox="0 0 17 16"><path d="M3 2.5 H14 Q16.2 2.5 16.2 8 Q16.2 13.5 14 13.5 H3Z" fill="#3a87c9"/><path d="M3 8 H16.2 Q16.2 13.5 14 13.5 H3Z" fill="#3a87c9"/><ellipse cx="3" cy="8" rx="2.4" ry="5.5" fill="#3a87c9" stroke="#c8c8c8" stroke-width="0.9"/><path d="M3 8 V13.5 A2.4 5.5 0 0 1 0.6 8Z" fill="#3a87c9"/><rect x="0" y="-0.5" width="7" height="6" fill="#fff"/><text x="0.6" y="5.2" font-size="7" font-family="Liberation Serif" font-weight="bold" fill="#111">D</text></svg>
<div class="a" style="left:111px;top:398.68px;font-size:11.6px;color:#000;">Initial Values 1</div>
<svg class="a" style="left:88.5px;top:415px;" width="17" height="16" viewBox="0 0 17 16"><path d="M3 2.5 H14 Q16.2 2.5 16.2 8 Q16.2 13.5 14 13.5 H3Z" fill="#dcdcdc"/><path d="M3 8 H16.2 Q16.2 13.5 14 13.5 H3Z" fill="#9a9a9a"/><ellipse cx="3" cy="8" rx="2.4" ry="5.5" fill="#dcdcdc" stroke="#c8c8c8" stroke-width="0.9"/><path d="M3 8 V13.5 A2.4 5.5 0 0 1 0.6 8Z" fill="#9a9a9a"/></svg>
<div class="a" style="left:111px;top:416.68px;font-size:11.6px;color:#6d6d6d;">Prescribed Displacement 1</div>
<svg class="a" style="left:88.5px;top:433px;" width="17" height="16" viewBox="0 0 17 16"><path d="M3 2.5 H14 Q16.2 2.5 16.2 8 Q16.2 13.5 14 13.5 H3Z" fill="#dcdcdc"/><path d="M3 8 H16.2 Q16.2 13.5 14 13.5 H3Z" fill="#9a9a9a"/><ellipse cx="3" cy="8" rx="2.4" ry="5.5" fill="#dcdcdc" stroke="#c8c8c8" stroke-width="0.9"/><path d="M3 8 V13.5 A2.4 5.5 0 0 1 0.6 8Z" fill="#9a9a9a"/></svg>
<div class="a" style="left:111px;top:434.68px;font-size:11.6px;color:#6d6d6d;">Prescribed Displacement 2</div>
<svg class="a" style="left:88.5px;top:451px;" width="17" height="16" viewBox="0 0 17 16"><path d="M3 2.5 H14 Q16.2 2.5 16.2 8 Q16.2 13.5 14 13.5 H3Z" fill="#dcdcdc"/><path d="M3 8 H16.2 Q16.2 13.5 14 13.5 H3Z" fill="#9a9a9a"/><ellipse cx="3" cy="8" rx="2.4" ry="5.5" fill="#dcdcdc" stroke="#c8c8c8" stroke-width="0.9"/><path d="M3 8 V13.5 A2.4 5.5 0 0 1 0.6 8Z" fill="#9a9a9a"/></svg>
<div class="a" style="left:111px;top:452.68px;font-size:11.6px;color:#6d6d6d;">Prescribed Displacement 3</div>
<svg class="a" style="left:88.5px;top:469px;" width="17" height="16" viewBox="0 0 17 16"><path d="M3 2.5 H14 Q16.2 2.5 16.2 8 Q16.2 13.5 14 13.5 H3Z" fill="#dcdcdc"/><path d="M3 8 H16.2 Q16.2 13.5 14 13.5 H3Z" fill="#9a9a9a"/><ellipse cx="3" cy="8" rx="2.4" ry="5.5" fill="#dcdcdc" stroke="#c8c8c8" stroke-width="0.9"/><path d="M3 8 V13.5 A2.4 5.5 0 0 1 0.6 8Z" fill="#9a9a9a"/></svg>
<div class="a" style="left:111px;top:470.68px;font-size:11.6px;color:#6d6d6d;">Prescribed Displacement 4</div>
<svg class="a" style="left:88.5px;top:487px;" width="17" height="16" viewBox="0 0 17 16"><path d="M3 2.5 H14 Q16.2 2.5 16.2 8 Q16.2 13.5 14 13.5 H3Z" fill="#dcdcdc"/><path d="M3 8 H16.2 Q16.2 13.5 14 13.5 H3Z" fill="#3a87c9"/><ellipse cx="3" cy="8" rx="2.4" ry="5.5" fill="#dcdcdc" stroke="#c8c8c8" stroke-width="0.9"/><path d="M3 8 V13.5 A2.4 5.5 0 0 1 0.6 8Z" fill="#3a87c9"/></svg>
<div class="a" style="left:111px;top:488.68px;font-size:11.6px;color:#000;">Periodic Condition 1</div>
<svg class="a" style="left:88.5px;top:505px;" width="17" height="16" viewBox="0 0 17 16"><path d="M3 2.5 H14 Q16.2 2.5 16.2 8 Q16.2 13.5 14 13.5 H3Z" fill="#dcdcdc"/><path d="M3 8 H16.2 Q16.2 13.5 14 13.5 H3Z" fill="#3a87c9"/><ellipse cx="3" cy="8" rx="2.4" ry="5.5" fill="#dcdcdc" stroke="#c8c8c8" stroke-width="0.9"/><path d="M3 8 V13.5 A2.4 5.5 0 0 1 0.6 8Z" fill="#3a87c9"/></svg>
<div class="a" style="left:111px;top:506.68px;font-size:11.6px;color:#000;">Periodic Condition 2</div>
<svg class="a" style="left:70px;top:523px;" width="16" height="14" viewBox="0 0 16 14"><path d="M8 0.5 L15.5 13.5 H0.5Z" fill="#eee" stroke="#888" stroke-width="1"/><path d="M4.2 7 H11.8 M6 10 L8 13.5 L10 10 M4.2 7 L6 10 H10 L11.8 7 M8 0.5 L6 10 M8 0.5 L10 10" fill="none" stroke="#888" stroke-width="0.7"/></svg>
<div class="a" style="left:91px;top:524.68px;font-size:11.6px;color:#000;">Mesh 1</div>
<svg class="a" style="left:34px;top:544px;" width="7" height="7" viewBox="0 0 7 7"><path d="M6.5 0.5 V6.5 H0.5Z" fill="#3c3c3c"/></svg>
<svg class="a" style="left:49px;top:544px;" width="18" height="10" viewBox="0 0 18 10"><path d="M0.5 4.5 Q2 1.5 3.8 3.8 Q5.5 6 7 4" fill="none" stroke="#2a9bb0" stroke-width="1.2"/><circle cx="10" cy="5" r="2.9" fill="none" stroke="#2a9bb0" stroke-width="1.3"/><circle cx="14.2" cy="5" r="2.9" fill="none" stroke="#2a9bb0" stroke-width="1.3"/></svg>
<div class="a" style="left:71px;top:542.68px;font-size:11.6px;color:#000;">Study 1</div>
<svg class="a" style="left:70px;top:559px;" width="16" height="16" viewBox="0 0 16 16"><path d="M1.5 0.5 V14.5 H15.5" fill="none" stroke="#777" stroke-width="1"/><path d="M3 12 Q6 5 14 4" fill="none" stroke="#2a9bb0" stroke-width="1.2"/><path d="M3.5 3 H15" stroke="#777" stroke-width="0.8"/></svg>
<div class="a" style="left:91px;top:560.68px;font-size:11.6px;color:#000;">Step 1: Stationary</div>
<svg class="a" style="left:55px;top:579.5px;" width="6" height="11" viewBox="0 0 6 11"><path d="M0.5 0.5 L5.5 5.5 L0.5 10.5Z" fill="#fff" stroke="#9a9a9a" stroke-width="1"/></svg>
<svg class="a" style="left:70px;top:577px;" width="17" height="16" viewBox="0 0 17 16"><path d="M1 1 V15.5" stroke="#555" stroke-width="1"/><path d="M2 1 H5 V4 H2Z M5 4 V15.5 M6 5 H10 V8 H6Z M9 8 V15.5 M10 10 H14 V13 H10Z" fill="#2a9bb0" stroke="#2a9bb0" stroke-width="0.6"/></svg>
<div class="a" style="left:91px;top:578.68px;font-size:11.6px;color:#000;">Solver Configurations</div>
<svg class="a" style="left:34px;top:598px;" width="7" height="7" viewBox="0 0 7 7"><path d="M6.5 0.5 V6.5 H0.5Z" fill="#3c3c3c"/></svg>
<svg class="a" style="left:49px;top:598px;" width="18" height="10" viewBox="0 0 18 10"><path d="M0.5 4.5 Q2 1.5 3.8 3.8 Q5.5 6 7 4" fill="none" stroke="#2a9bb0" stroke-width="1.2"/><circle cx="10" cy="5" r="2.9" fill="none" stroke="#2a9bb0" stroke-width="1.3"/><circle cx="14.2" cy="5" r="2.9" fill="none" stroke="#2a9bb0" stroke-width="1.3"/></svg>
<div class="a" style="left:71px;top:596.68px;font-size:11.6px;color:#000;">Study 2</div>
<svg class="a" style="left:70px;top:613px;" width="16" height="16" viewBox="0 0 16 16"><text x="1" y="6" font-size="6.5" font-family="Liberation Sans" fill="#2a9bb0">123</text><g stroke="#2a9bb0" stroke-width="1.5"><path d="M1 8.5 H4 M6 8.5 H9 M11 8.5 H14 M1 11 H4 M6 11 H9 M11 11 H14 M1 13.5 H4 M6 13.5 H9 M11 13.5 H14"/></g></svg>
<div class="a" style="left:91px;top:614.68px;font-size:11.6px;color:#000;">Parametric Sweep</div>
<svg class="a" style="left:70px;top:631px;" width="16" height="16" viewBox="0 0 16 16"><path d="M1.5 0.5 V14.5 H15.5" fill="none" stroke="#777" stroke-width="1"/><path d="M5 13.5 V9 M8 13.5 V6 M11 13.5 V8 M13.5 13.5 V11" stroke="#2a9bb0" stroke-width="1.6"/></svg>
<div class="a" style="left:97px;top:632.68px;font-size:11.6px;color:#000;">Step 1: Eigenfrequency</div>
<svg class="a" style="left:55px;top:651.5px;" width="6" height="11" viewBox="0 0 6 11"><path d="M0.5 0.5 L5.5 5.5 L0.5 10.5Z" fill="#fff" stroke="#9a9a9a" stroke-width="1"/></svg>
<svg class="a" style="left:70px;top:649px;" width="17" height="16" viewBox="0 0 17 16"><path d="M1 1 V15.5" stroke="#555" stroke-width="1"/><path d="M2 1 H5 V4 H2Z M5 4 V15.5 M6 5 H10 V8 H6Z M9 8 V15.5 M10 10 H14 V13 H10Z" fill="#2a9bb0" stroke="#2a9bb0" stroke-width="0.6"/></svg>
<div class="a" style="left:91px;top:650.68px;font-size:11.6px;color:#000;">Solver Configurations</div>
<svg class="a" style="left:55px;top:669.5px;" width="6" height="11" viewBox="0 0 6 11"><path d="M0.5 0.5 L5.5 5.5 L0.5 10.5Z" fill="#fff" stroke="#9a9a9a" stroke-width="1"/></svg>
<svg class="a" style="left:70px;top:667px;" width="17" height="17" viewBox="0 0 17 17"><path d="M3 1 H14 L13 8 H4Z" fill="#3a6cb0"/><path d="M1 9 H16 L15 11 H2Z" fill="#4a7ab8"/><rect x="2" y="13" width="3" height="3" fill="#2a9bb0"/><rect x="7" y="13" width="3" height="3" fill="#4aa04a"/><rect x="12" y="13" width="3" height="3" fill="#e38b30"/></svg>
<div class="a" style="left:91px;top:668.68px;font-size:11.6px;color:#000;">Job Configurations</div>
<svg class="a" style="left:34px;top:688px;" width="7" height="7" viewBox="0 0 7 7"><path d="M6.5 0.5 V6.5 H0.5Z" fill="#3c3c3c"/></svg>
<svg class="a" style="left:50px;top:685px;" width="16" height="16" viewBox="0 0 16 16"><path d="M0.5 3.5 H11.5 V15.5 H0.5Z" fill="#f4f4f4" stroke="#888"/><path d="M2.5 2 H13.5 V13.5 M4.5 0.5 H15.5 V11.5" fill="none" stroke="#888" stroke-width="0.9"/><rect x="2.5" y="6" width="7" height="7" fill="#b5559f"/></svg>
<div class="a" style="left:71px;top:686.68px;font-size:11.6px;color:#000;">Results</div>
<svg class="a" style="left:55px;top:705.5px;" width="6" height="11" viewBox="0 0 6 11"><path d="M0.5 0.5 L5.5 5.5 L0.5 10.5Z" fill="#fff" stroke="#9a9a9a" stroke-width="1"/></svg>
<svg class="a" style="left:70px;top:703px;" width="16" height="16" viewBox="0 0 16 16"><g fill="#b5559f"><rect x="1" y="1" width="1.3" height="1.3"/><rect x="1" y="4" width="1.3" height="1.3"/><rect x="1" y="7" width="1.3" height="1.3"/><rect x="1" y="10" width="1.3" height="1.3"/><rect x="1" y="13" width="1.3" height="1.3"/><rect x="4" y="1" width="1.3" height="1.3"/><rect x="4" y="4" width="1.3" height="1.3"/><rect x="4" y="7" width="1.3" height="1.3"/><rect x="4" y="10" width="1.3" height="1.3"/><rect x="4" y="13" width="1.3" height="1.3"/><rect x="7" y="1" width="1.3" height="1.3"/><rect x="7" y="4" width="1.3" height="1.3"/><rect x="7" y="7" width="1.3" height="1.3"/><rect x="7" y="10" width="1.3" height="1.3"/><rect x="7" y="13" width="1.3" height="1.3"/><rect x="10" y="1" width="1.3" height="1.3"/><rect x="10" y="4" width="1.3" height="1.3"/><rect x="10" y="7" width="1.3" height="1.3"/><rect x="10" y="10" width="1.3" height="1.3"/><rect x="10" y="13" width="1.3" height="1.3"/><rect x="13" y="1" width="1.3" height="1.3"/><rect x="13" y="4" width="1.3" height="1.3"/><rect x="13" y="7" width="1.3" height="1.3"/><rect x="13" y="10" width="1.3" height="1.3"/><rect x="13" y="13" width="1.3" height="1.3"/></g></svg>
<div class="a" style="left:91px;top:704.68px;font-size:11.6px;color:#000;">Datasets</div>
<svg class="a" style="left:70px;top:721px;" width="17" height="16" viewBox="0 0 17 16"><text x="0.5" y="7" font-size="7.5" font-family="Liberation Sans" fill="#b5559f">8.85</text><text x="0.5" y="14.5" font-size="7.5" font-family="Liberation Sans" fill="#b5559f">e-12</text></svg>
<div class="a" style="left:91px;top:722.68px;font-size:11.6px;color:#000;">Derived Values</div>
<svg class="a" style="left:70px;top:739px;" width="14" height="14" viewBox="0 0 14 14"><path d="M0.5 0.5 H13.5 V13.5 H0.5Z M0.5 4.5 H13.5 M0.5 9 H13.5 M4.5 0.5 V13.5 M9 0.5 V13.5" fill="none" stroke="#b5559f" stroke-width="1"/></svg>
<div class="a" style="left:91px;top:740.68px;font-size:11.6px;color:#000;">Tables</div>
<svg class="a" style="left:55px;top:759.5px;" width="6" height="11" viewBox="0 0 6 11"><path d="M0.5 0.5 L5.5 5.5 L0.5 10.5Z" fill="#fff" stroke="#9a9a9a" stroke-width="1"/></svg>
<svg class="a" style="left:70.5px;top:757.5px;" width="16" height="14" viewBox="0 0 16 14"><path d="M0.3 0.71 L11.31 0 L15.50 3.54 V13.60 H4.19 L0.3 9.89Z" fill="#b5559f"/><rect x="4.19" y="3.54" width="11.31" height="10.06" fill="#b5559f"/><path d="M4.19 13.60 V3.54 H15.50 M4.19 3.54 L0.3 0.71" fill="none" stroke="#e9cfe3" stroke-width="0.8"/></svg>
<div class="a" style="left:91px;top:758.68px;font-size:11.6px;color:#000;">Stress (solid)</div>
<svg class="a" style="left:54px;top:778px;" width="7" height="7" viewBox="0 0 7 7"><path d="M6.5 0.5 V6.5 H0.5Z" fill="#3c3c3c"/></svg>
<svg class="a" style="left:70px;top:777px;" width="16" height="10" viewBox="0 0 16 10"><path d="M0.5 5 Q4 -1 8 4.5 Q12 10 15.5 4" fill="none" stroke="#b5559f" stroke-width="1.2"/></svg>
<div class="a" style="left:91px;top:776.68px;font-size:11.6px;color:#000;">1D Plot Group 2</div>
<svg class="a" style="left:90px;top:793px;" width="17" height="17" viewBox="0 0 17 17"><circle cx="8.5" cy="8.5" r="7.5" fill="none" stroke="#888" stroke-width="1"/><path d="M4.5 4 V12.5 H13" fill="none" stroke="#555" stroke-width="0.8"/><path d="M5.5 7 Q8 12 12 9" fill="none" stroke="#b5559f" stroke-width="1"/></svg>
<div class="a" style="left:111px;top:794.68px;font-size:11.6px;color:#000;">Global 1</div>
<svg class="a" style="left:54px;top:814px;" width="7" height="7" viewBox="0 0 7 7"><path d="M6.5 0.5 V6.5 H0.5Z" fill="#3c3c3c"/></svg>
<svg class="a" style="left:70.5px;top:811.5px;" width="16" height="14" viewBox="0 0 16 14"><path d="M0.3 0.71 L11.31 0 L15.50 3.54 V13.60 H4.19 L0.3 9.89Z" fill="#b5559f"/><rect x="4.19" y="3.54" width="11.31" height="10.06" fill="#b5559f"/><path d="M4.19 13.60 V3.54 H15.50 M4.19 3.54 L0.3 0.71" fill="none" stroke="#e9cfe3" stroke-width="0.8"/></svg>
<div class="a" style="left:91px;top:812.68px;font-size:11.6px;color:#000;">Mode Shape (solid)</div>
<svg class="a" style="left:74px;top:832px;" width="7" height="7" viewBox="0 0 7 7"><path d="M6.5 0.5 V6.5 H0.5Z" fill="#3c3c3c"/></svg>
<svg class="a" style="left:90.5px;top:830px;" width="16" height="15" viewBox="0 0 16 15"><path d="M0.5 0.5 H10.85 L15.00 4.35 H4.65Z" fill="#b5559f"/><path d="M4.65 4.35 H15.00 V14.00 H4.65Z" fill="none" stroke="#909090" stroke-width="1"/><path d="M0.5 0.5 H10.85 V10.15 H0.5Z M0.5 0.5 L4.65 4.35 M10.85 0.5 L15.00 4.35 M0.5 10.15 L4.65 14.00 M10.85 10.15 L15.00 14.00" fill="none" stroke="#909090" stroke-width="0.9"/></svg>
<div class="a" style="left:111px;top:830.68px;font-size:11.6px;color:#000;">Surface 1</div>
<svg class="a" style="left:110px;top:847px;" width="17" height="14" viewBox="0 0 17 14"><path d="M0.5 3.5 Q8 1 16 4.5 L12 6.5 L16 12.5 Q9 6 0.5 6.5" fill="none" stroke="#b5559f" stroke-width="1.2"/></svg>
<div class="a" style="left:131px;top:848.68px;font-size:11.6px;color:#000;">Deformation</div>
<svg class="a" style="left:55px;top:867.5px;" width="6" height="11" viewBox="0 0 6 11"><path d="M0.5 0.5 L5.5 5.5 L0.5 10.5Z" fill="#fff" stroke="#9a9a9a" stroke-width="1"/></svg>
<svg class="a" style="left:70px;top:865px;" width="17" height="17" viewBox="0 0 17 17"><path d="M0.5 4.5 H11.5 V16.5 H0.5Z" fill="#f4f4f4" stroke="#888"/><path d="M2.5 3 H13.5 V14.5 M4.5 1.5 H15.5 V12.5" fill="none" stroke="#888" stroke-width="0.9"/><path d="M4 14 V10 M6.5 14 V8 M9 14 V11" stroke="#b5559f" stroke-width="1.2"/><path d="M13 0 L16 3 M16 0 L13 3" stroke="#555" stroke-width="0.8"/></svg>
<div class="a" style="left:91px;top:866.68px;font-size:11.6px;color:#000;">Eigenfrequencies (Study 2)</div>
<svg class="a" style="left:55px;top:885.5px;" width="6" height="11" viewBox="0 0 6 11"><path d="M0.5 0.5 L5.5 5.5 L0.5 10.5Z" fill="#fff" stroke="#9a9a9a" stroke-width="1"/></svg>
<svg class="a" style="left:70px;top:883px;" width="17" height="17" viewBox="0 0 17 17"><path d="M0.5 4.5 H11.5 V16.5 H0.5Z" fill="#f4f4f4" stroke="#888"/><path d="M2.5 3 H13.5 V14.5 M4.5 1.5 H15.5 V12.5" fill="none" stroke="#888" stroke-width="0.9"/><path d="M4 14 V10 M6.5 14 V8 M9 14 V11" stroke="#b5559f" stroke-width="1.2"/><path d="M13 0 L16 3 M16 0 L13 3" stroke="#555" stroke-width="0.8"/></svg>
<div class="a" style="left:91px;top:884.68px;font-size:11.6px;color:#000;">Participation Factors (Study 2)</div>
<svg class="a" style="left:70px;top:901px;" width="17" height="16" viewBox="0 0 17 16"><path d="M0.5 4.5 H15.5 V15.5 H0.5Z" fill="#f4e6f0" stroke="#b5559f"/><path d="M2.5 2.5 H13.5 M4.5 0.5 H11.5" stroke="#b5559f" stroke-width="1"/><rect x="3" y="7" width="10" height="6" fill="none" stroke="#b5559f" stroke-width="1"/></svg>
<div class="a" style="left:91px;top:902.68px;font-size:11.6px;color:#000;">Export</div>
<svg class="a" style="left:70px;top:919px;" width="15" height="17" viewBox="0 0 15 17"><path d="M0.5 0.5 H11.5 V16.5 H0.5Z" fill="#fff" stroke="#b5559f"/><path d="M2.5 4 H8 M2.5 7 H6" stroke="#b5559f" stroke-width="0.9"/><path d="M4 13 L13 3" stroke="#b5559f" stroke-width="2"/></svg>
<div class="a" style="left:91px;top:920.68px;font-size:11.6px;color:#000;">Reports</div>
<div class="a" style="left:377px;top:141px;width:377px;height:868px;background:#f8f9fc;border:1px solid #d6d6d6;box-sizing:border-box"></div>
<div class="a" style="left:378px;top:170px;width:375px;height:1px;background:#d6d6d6"></div>
<div class="a" style="left:382px;top:147px;width:56px;height:24px;background:#f8f9fc;border:1px solid #d6d6d6;border-bottom:none;box-sizing:border-box"></div>
<div class="a" style="left:387px;top:154.85px;font-size:12.7px;color:#3462a8;">Settings</div>
<div class="a" style="left:446px;top:147px;width:84px;height:23px;background:#e9e9ea"></div>
<div class="a" style="left:450px;top:153.85px;font-size:12.7px;color:#000;">Add Pre...</div>
<svg class="a" style="left:514px;top:153px;" width="10" height="10" viewBox="0 0 10 10"><path d="M1 1 L9 9 M9 1 L1 9" stroke="#c2c8d4" stroke-width="1.1"/></svg>
<div class="a" style="left:538px;top:147px;width:84px;height:23px;background:#e9e9ea"></div>
<div class="a" style="left:542px;top:153.85px;font-size:12.7px;color:#000;">Add Ma...</div>
<svg class="a" style="left:606px;top:153px;" width="10" height="10" viewBox="0 0 10 10"><path d="M1 1 L9 9 M9 1 L1 9" stroke="#c2c8d4" stroke-width="1.1"/></svg>
<div class="a" style="left:630px;top:147px;width:84px;height:23px;background:#e9e9ea"></div>
<div class="a" style="left:634px;top:153.85px;font-size:12.7px;color:#000;">Add Stu...</div>
<svg class="a" style="left:698px;top:153px;" width="10" height="10" viewBox="0 0 10 10"><path d="M1 1 L9 9 M9 1 L1 9" stroke="#c2c8d4" stroke-width="1.1"/></svg>
<svg class="a" style="left:726px;top:158px;" width="10" height="6" viewBox="0 0 10 6"><path d="M0 0 H10 L5 5.5Z" fill="#555"/></svg>
<svg class="a" style="left:741px;top:156px;" width="9" height="12" viewBox="0 0 9 12"><path d="M2 0 H7 V6 L8.5 7.5 H0.5 L2 6Z" fill="#555"/><path d="M4.5 7.5 V12" stroke="#555" stroke-width="1.3"/></svg>
<div class="a" style="left:383.5px;top:181.65px;font-size:14px;color:#3a68ae;-webkit-text-stroke:0;">Deformation</div>
<svg class="a" style="left:385px;top:201px;" width="16" height="13" viewBox="0 0 16 13"><rect x="0.5" y="0.5" width="15" height="12" fill="#f4f4f4" stroke="#8c8c8c"/><rect x="1" y="1" width="14" height="2" fill="#cfcfcf"/><rect x="2.5" y="4" width="11" height="7" fill="#b5559f"/><circle cx="5.5" cy="7.5" r="2.7" fill="#b5559f" stroke="#fff" stroke-width="0.9"/><path d="M4 7.5 H7 M6 6.3 L7.2 7.5 L6 8.7" fill="none" stroke="#fff" stroke-width="0.9"/></svg>
<div class="a" style="left:405px;top:201.84px;font-size:12px;color:#000;">Plot</div>
<div class="a" style="left:383px;top:234.84px;font-size:12px;color:#000;">Label:</div>
<div class="a" style="left:424px;top:232px;width:296px;height:18px;background:#fff;border:1px solid #c9c9c9;box-sizing:border-box"></div>
<div class="a" style="left:427px;top:234.84px;font-size:12px;color:#000;">Deformation</div>
<div class="a" style="left:728px;top:230px;width:20px;height:21px;background:#ececec;border:1px solid #cfcfcf;border-radius:2px;box-sizing:border-box"></div>
<svg class="a" style="left:730px;top:233px;" width="15" height="15" viewBox="0 0 15 15"><rect x="2.5" y="1.5" width="11.5" height="10.5" fill="#fff" stroke="#707070" stroke-width="1"/><rect x="2.5" y="1.5" width="11.5" height="2" fill="#8a8a8a"/><path d="M6 6.5 H12 M6 9 H12" stroke="#20a08a" stroke-width="1"/><path d="M1 14 L4.5 10.5" stroke="#20a08a" stroke-width="1.3"/><path d="M2 10 H5 V13Z" fill="#20a08a"/></svg>
<div class="a" style="left:378px;top:261px;width:375px;height:26px;background:#dfe8f3"></div>
<svg class="a" style="left:384px;top:271px;" width="9" height="6" viewBox="0 0 9 6"><path d="M0 0 H9 L4.5 5.5Z" fill="#444"/></svg>
<div class="a" style="left:404px;top:269.33px;font-size:12.6px;color:#000;">Expression</div>
<svg class="a" style="left:675px;top:266px;" width="14" height="14" viewBox="0 0 14 14"><path d="M7 0.5 V13.5 M0.5 7 H13.5" stroke="#3a87c9" stroke-width="1.3"/></svg>
<svg class="a" style="left:696px;top:271px;" width="7" height="5" viewBox="0 0 7 5"><path d="M0 0 H7 L3.5 4Z" fill="#333"/></svg>
<svg class="a" style="left:718px;top:267px;" width="9" height="13" viewBox="0 0 9 13"><path d="M0.5 0.5 L8 4 L0.5 6.5Z" fill="#3aa54a"/><path d="M8.5 6.5 V12.5 L1 9.5Z" fill="#d8305a"/></svg>
<svg class="a" style="left:736px;top:271px;" width="7" height="5" viewBox="0 0 7 5"><path d="M0 0 H7 L3.5 4Z" fill="#333"/></svg>
<div class="a" style="left:383px;top:297.84px;font-size:12px;color:#000;">X-component:</div>
<div class="a" style="left:383px;top:317px;width:344px;height:18px;background:#fff;border:1px solid #c9c9c9;box-sizing:border-box"></div>
<div class="a" style="left:386px;top:319.84px;font-size:12px;color:#000;">u</div>
<div class="a" style="left:737px;top:320.84px;font-size:12px;color:#000;">m</div>
<div class="a" style="left:383px;top:342.84px;font-size:12px;color:#000;">Y-component:</div>
<div class="a" style="left:383px;top:362px;width:344px;height:18px;background:#fff;border:1px solid #c9c9c9;box-sizing:border-box"></div>
<div class="a" style="left:386px;top:364.84px;font-size:12px;color:#000;">v</div>
<div class="a" style="left:737px;top:365.34px;font-size:12px;color:#000;">m</div>
<div class="a" style="left:383px;top:387.84px;font-size:12px;color:#000;">Z-component:</div>
<div class="a" style="left:383px;top:407px;width:344px;height:18px;background:#fff;border:1px solid #c9c9c9;box-sizing:border-box"></div>
<div class="a" style="left:386px;top:409.84px;font-size:12px;color:#000;">w</div>
<div class="a" style="left:737px;top:410.84px;font-size:12px;color:#000;">m</div>
<div class="a" style="left:383px;top:433.84px;font-size:12px;color:#000;">Description:</div>
<div class="a" style="left:457px;top:433px;width:14px;height:14px;background:#f0f0f0;border:1px solid #9a9a9a;box-sizing:border-box"></div>
<div class="a" style="left:486px;top:431px;width:262px;height:18px;background:#f7f7f7;border:1px solid #dcdcdc;box-sizing:border-box"></div>
<div class="a" style="left:490px;top:433.84px;font-size:12px;color:#a0a0a0;">Displacement field</div>
<div class="a" style="left:378px;top:460px;width:375px;height:26px;background:#dfe8f3"></div>
<svg class="a" style="left:385px;top:468px;" width="6" height="10" viewBox="0 0 6 10"><path d="M0.5 0.5 L5 5 L0.5 9.5Z" fill="none" stroke="#a0a0a0" stroke-width="1"/></svg>
<div class="a" style="left:404px;top:468.33px;font-size:12.6px;color:#000;">Title</div>
<div class="a" style="left:378px;top:488px;width:375px;height:26px;background:#dfe8f3"></div>
<svg class="a" style="left:384px;top:498px;" width="9" height="6" viewBox="0 0 9 6"><path d="M0 0 H9 L4.5 5.5Z" fill="#444"/></svg>
<div class="a" style="left:404px;top:496.33px;font-size:12.6px;color:#000;">Scale</div>
<div class="a" style="left:383px;top:525.84px;font-size:12px;color:#000;">Scale factor:</div>
<div class="a" style="left:458px;top:524px;width:14px;height:14px;background:#f0f0f0;border:1px solid #7a7a7a;box-sizing:border-box"></div>
<svg class="a" style="left:460px;top:526px;" width="10" height="10" viewBox="0 0 10 10"><path d="M1 5 L4 8.5 L9.5 1" fill="none" stroke="#222" stroke-width="1.5"/></svg>
<div class="a" style="left:487px;top:523px;width:261px;height:18px;background:#fff;border:1px solid #c9c9c9;box-sizing:border-box"></div>
<div class="a" style="left:490px;top:525.84px;font-size:12px;color:#000;">1</div>
<div class="a" style="left:378px;top:552px;width:375px;height:26px;background:#dfe8f3"></div>
<svg class="a" style="left:385px;top:560px;" width="6" height="10" viewBox="0 0 6 10"><path d="M0.5 0.5 L5 5 L0.5 9.5Z" fill="none" stroke="#a0a0a0" stroke-width="1"/></svg>
<div class="a" style="left:404px;top:560.33px;font-size:12.6px;color:#000;">Advanced</div>
<div class="a" style="left:759px;top:141px;width:704px;height:868px;background:linear-gradient(to bottom,#f8f9fc 0px,#f5f8fd 60px,#e3effd 868px);border:1px solid #a6d2f6;border-right:none;box-sizing:border-box"></div>
<div class="a" style="left:760px;top:142px;width:703px;height:29px;background:#f8f9fc"></div>
<div class="a" style="left:760px;top:170px;width:703px;height:1px;background:#d6d6d6"></div>
<div class="a" style="left:764px;top:147px;width:61px;height:24px;background:#f8f9fc;border:1px solid #d6d6d6;border-bottom:none;box-sizing:border-box"></div>
<div class="a" style="left:769px;top:154.85px;font-size:12.7px;color:#2a8ad8;">Graphics</div>
<div class="a" style="left:833px;top:147px;width:201px;height:23px;background:#e9e9ea"></div>
<div class="a" style="left:837px;top:153.85px;font-size:12.7px;color:#000;">Participation Factors (Study 2)</div>
<svg class="a" style="left:1018px;top:153px;" width="10" height="10" viewBox="0 0 10 10"><path d="M1 1 L9 9 M9 1 L1 9" stroke="#c2c8d4" stroke-width="1.1"/></svg>
<div class="a" style="left:1042px;top:147px;width:86px;height:23px;background:#e9e9ea"></div>
<div class="a" style="left:1046px;top:153.85px;font-size:12.7px;color:#000;">Messages</div>
<svg class="a" style="left:1112px;top:153px;" width="10" height="10" viewBox="0 0 10 10"><path d="M1 1 L9 9 M9 1 L1 9" stroke="#c2c8d4" stroke-width="1.1"/></svg>
<div class="a" style="left:1137px;top:147px;width:60px;height:23px;background:#e9e9ea"></div>
<div class="a" style="left:1141px;top:153.85px;font-size:12.7px;color:#000;">Progress</div>
<div class="a" style="left:1205px;top:147px;width:30px;height:23px;background:#e9e9ea"></div>
<div class="a" style="left:1209px;top:153.85px;font-size:12.7px;color:#000;">Log</div>
<div class="a" style="left:1243px;top:147px;width:141px;height:23px;background:#e9e9ea"></div>
<div class="a" style="left:1247px;top:153.85px;font-size:12.7px;color:#000;">Convergence Plot 1</div>
<svg class="a" style="left:1368px;top:153px;" width="10" height="10" viewBox="0 0 10 10"><path d="M1 1 L9 9 M9 1 L1 9" stroke="#c2c8d4" stroke-width="1.1"/></svg>
<svg class="a" style="left:768px;top:179px;" width="15" height="15" viewBox="0 0 15 15"><circle cx="6" cy="6" r="5" fill="none" stroke="#2a7fc8" stroke-width="1.6"/><path d="M9.5 9.5 L14 14" stroke="#2a7fc8" stroke-width="2.2"/><path d="M3.5 6 H8.5 M6 3.5 V8.5" stroke="#2a7fc8" stroke-width="1.2"/></svg>
<svg class="a" style="left:791px;top:179px;" width="15" height="15" viewBox="0 0 15 15"><circle cx="6" cy="6" r="5" fill="none" stroke="#2a7fc8" stroke-width="1.6"/><path d="M9.5 9.5 L14 14" stroke="#2a7fc8" stroke-width="2.2"/><path d="M3.5 6 H8.5" stroke="#2a7fc8" stroke-width="1.2"/></svg>
<svg class="a" style="left:813px;top:179px;" width="16" height="15" viewBox="0 0 16 15"><rect x="0.5" y="6.5" width="7" height="7" fill="none" stroke="#2a7fc8" stroke-width="1" stroke-dasharray="1.5,1"/><circle cx="8" cy="6" r="4.5" fill="none" stroke="#2a7fc8" stroke-width="1.5"/><path d="M11 9 L15 13.5" stroke="#2a7fc8" stroke-width="2"/><path d="M6 6 H10 M8 4 V8" stroke="#2a7fc8" stroke-width="1"/></svg>
<svg class="a" style="left:836px;top:184px;" width="7" height="5" viewBox="0 0 7 5"><path d="M0 0 H7 L3.5 4Z" fill="#222"/></svg>
<svg class="a" style="left:854px;top:178px;" width="16" height="16" viewBox="0 0 16 16"><rect x="0.5" y="0.5" width="14.5" height="14.5" fill="none" stroke="#555" stroke-width="1"/><path d="M7.75 4.5 V11 M4.5 7.75 H11" stroke="#555" stroke-width="1"/><path d="M5.5 3.5 L7.75 1.3 L10 3.5Z M5.5 12 L7.75 14.2 L10 12Z M3.5 5.5 L1.3 7.75 L3.5 10Z M12 5.5 L14.2 7.75 L12 10Z" fill="#2a7fc8"/></svg>
<div class="a" style="left:877px;top:179px;width:1px;height:14px;background:#d0d0d0"></div>
<svg class="a" style="left:884px;top:178px;" width="17" height="16" viewBox="0 0 17 16"><path d="M7 13.5 V2.5" stroke="#3a87c9" stroke-width="1.1"/><path d="M5.2 3.2 L7 0.5 L8.8 3.2Z" fill="#3a87c9"/><path d="M7 13.5 L1.5 8.8" stroke="#3aa54a" stroke-width="1.1"/><path d="M0.5 10.5 L1 7.5 L3.5 8.5Z" fill="#3aa54a"/><path d="M7 13.5 L15 8.5" stroke="#d8305a" stroke-width="1.1"/><path d="M13 7.5 L16.5 7.5 L14.5 10.3Z" fill="#d8305a"/></svg>
<svg class="a" style="left:908px;top:184px;" width="7" height="5" viewBox="0 0 7 5"><path d="M0 0 H7 L3.5 4Z" fill="#222"/></svg>
<svg class="a" style="left:927px;top:178px;" width="16" height="16" viewBox="0 0 16 16"><path d="M1.5 0.5 V14.5" stroke="#3aa54a" stroke-width="1"/><path d="M1.5 14.5 H15" stroke="#d8305a" stroke-width="1"/><path d="M13 12.5 L15 14.5 L13 16.5" fill="none" stroke="#d8305a" stroke-width="0.8"/><text x="3.5" y="9" font-size="8.5" font-family="Liberation Sans" fill="#888">xy</text></svg>
<svg class="a" style="left:950px;top:178px;" width="16" height="16" viewBox="0 0 16 16"><path d="M1.5 0.5 V14.5" stroke="#3a87c9" stroke-width="1"/><path d="M1.5 14.5 H15" stroke="#3aa54a" stroke-width="1"/><path d="M13 12.5 L15 14.5 L13 16.5" fill="none" stroke="#3aa54a" stroke-width="0.8"/><text x="3.5" y="9" font-size="8.5" font-family="Liberation Sans" fill="#888">yz</text></svg>
<svg class="a" style="left:973px;top:178px;" width="16" height="16" viewBox="0 0 16 16"><path d="M1.5 0.5 V14.5" stroke="#3a87c9" stroke-width="1"/><path d="M1.5 14.5 H15" stroke="#d8305a" stroke-width="1"/><path d="M13 12.5 L15 14.5 L13 16.5" fill="none" stroke="#d8305a" stroke-width="0.8"/><text x="3.5" y="9" font-size="8.5" font-family="Liberation Sans" fill="#888">xz</text></svg>
<div class="a" style="left:993px;top:176px;width:21px;height:20px;background:#a9d3f8;border:1px solid #3d8fe0;border-radius:2px;box-sizing:border-box"></div>
<svg class="a" style="left:996px;top:179px;" width="15" height="14" viewBox="0 0 15 14"><rect x="0.5" y="0.5" width="6" height="13" rx="1" fill="#2a7fc8"/><path d="M7 4 L13.5 1 V13 L7 10Z" fill="#9cc8f0" stroke="#2a7fc8" stroke-width="1"/><path d="M9.5 4 V10 M11.5 3 V11" stroke="#2a7fc8" stroke-width="0.8"/></svg>
<div class="a" style="left:1019px;top:179px;width:1px;height:14px;background:#d0d0d0"></div>
<svg class="a" style="left:1026px;top:179px;" width="15" height="15" viewBox="0 0 15 15"><path d="M12.5 5 A6 6 0 1 0 13 10" fill="none" stroke="#2a7fc8" stroke-width="1.4"/><path d="M9 1 L14 4 L10 7Z" fill="#2a7fc8"/></svg>
<svg class="a" style="left:1048px;top:184px;" width="7" height="5" viewBox="0 0 7 5"><path d="M0 0 H7 L3.5 4Z" fill="#222"/></svg>
<div class="a" style="left:1066px;top:179px;width:1px;height:14px;background:#d0d0d0"></div>
<svg class="a" style="left:1073px;top:178px;" width="17" height="16" viewBox="0 0 17 16"><path d="M0.5 4.5 L4.5 0.5 H16 V11.5 L12 15.5 H0.5Z M0.5 4.5 H12 V15.5 M12 4.5 L16 0.5 M4.5 0.5 V11.5 H16 M4.5 11.5 L0.5 15.5" fill="none" stroke="#777" stroke-width="1"/><path d="M0.5 8 H16 M8 0.5 V15.5" stroke="#aaa" stroke-width="0.7"/></svg>
<svg class="a" style="left:1096px;top:184px;" width="7" height="5" viewBox="0 0 7 5"><path d="M0 0 H7 L3.5 4Z" fill="#222"/></svg>
<div class="a" style="left:1114px;top:179px;width:1px;height:14px;background:#d0d0d0"></div>
<div class="a" style="left:1120px;top:176px;width:38px;height:20px;background:#a9d3f8;border:1px solid #3d8fe0;border-radius:2px;box-sizing:border-box"></div>
<div class="a" style="left:1139px;top:178px;width:1px;height:16px;background:#3d8fe0"></div>
<svg class="a" style="left:1123px;top:180px;" width="14" height="12" viewBox="0 0 14 12"><path d="M1 3.5 H5 L11 0.5 V11.5 L5 8.5 H1Z" fill="#2a7fc8"/></svg>
<svg class="a" style="left:1145px;top:184px;" width="7" height="5" viewBox="0 0 7 5"><path d="M0 0 H7 L3.5 4Z" fill="#222"/></svg>
<svg class="a" style="left:1164px;top:179px;" width="15" height="14" viewBox="0 0 15 14"><path d="M0.5 3.5 L3.5 0.5 H14.5 V10.5 L11.5 13.5 H0.5Z" fill="#dbe9f7" stroke="#5a8cc0"/><path d="M0.5 3.5 H11.5 V13.5 M11.5 3.5 L14.5 0.5" fill="none" stroke="#5a8cc0"/></svg>
<svg class="a" style="left:1186px;top:184px;" width="7" height="5" viewBox="0 0 7 5"><path d="M0 0 H7 L3.5 4Z" fill="#222"/></svg>
<div class="a" style="left:1202px;top:176px;width:20px;height:20px;background:#a9d3f8;border:1px solid #3d8fe0;border-radius:2px;box-sizing:border-box"></div>
<svg class="a" style="left:1205px;top:179px;" width="14" height="14" viewBox="0 0 14 14"><rect x="0.5" y="0.5" width="13" height="13" fill="#e8e8e8" stroke="#666"/><path d="M7 9 V3" stroke="#3a87c9" stroke-width="1"/><path d="M7 9 L3 6.5" stroke="#3aa54a" stroke-width="1"/><path d="M7 9 L11 7" stroke="#d8305a" stroke-width="1"/></svg>
<svg class="a" style="left:1227px;top:179px;" width="16" height="15" viewBox="0 0 16 15"><rect x="0.5" y="0.5" width="15" height="14" fill="#fff" stroke="#666"/><path d="M4.5 3 V12.5 M8 3 V12.5 M11.5 3 V12.5 M3 4.5 H13 M3 8 H13 M3 11 H13" stroke="#3a87c9" stroke-width="1"/></svg>
<svg class="a" style="left:1250px;top:179px;" width="16" height="15" viewBox="0 0 16 15"><rect x="0.5" y="0.5" width="15" height="14" fill="#fff" stroke="#666"/><defs><linearGradient id="cl" x1="0" y1="0" x2="0" y2="1"><stop offset="0" stop-color="#d82020"/><stop offset="0.5" stop-color="#f0a020"/><stop offset="1" stop-color="#f0e040"/></linearGradient></defs><rect x="10" y="2.5" width="3" height="10" fill="url(#cl)"/></svg>
<svg class="a" style="left:1274px;top:178px;" width="16" height="16" viewBox="0 0 16 16"><circle cx="8" cy="8" r="7" fill="#2a7fc8"/><circle cx="8" cy="8" r="3" fill="#f8f9fc"/><path d="M8 1 L9.5 5 M15 8 L11 9.5 M8 15 L6.5 11 M1 8 L5 6.5 M3 3 L6 6 M13 3 L10 6 M13 13 L10 10 M3 13 L6 10" stroke="#f8f9fc" stroke-width="1.2"/></svg>
<svg class="a" style="left:1296px;top:184px;" width="7" height="5" viewBox="0 0 7 5"><path d="M0 0 H7 L3.5 4Z" fill="#222"/></svg>
<svg class="a" style="left:1314px;top:179px;" width="17" height="14" viewBox="0 0 17 14"><path d="M0.5 3.5 H4.5 L6 1 H11 L12.5 3.5 H16.5 V13.5 H0.5Z" fill="#2a7fc8"/><circle cx="8.5" cy="8.5" r="3.3" fill="#f8f9fc"/><circle cx="8.5" cy="8.5" r="2" fill="#2a7fc8"/></svg>
<svg class="a" style="left:1338px;top:178px;" width="15" height="16" viewBox="0 0 15 16"><rect x="3.5" y="0.5" width="8" height="4" fill="#fff" stroke="#2a7fc8"/><path d="M0.5 5 H14.5 V12 H0.5Z" fill="#2a7fc8"/><rect x="3.5" y="9.5" width="8" height="6" fill="#fff" stroke="#2a7fc8"/></svg>
<div class="a" style="left:776px;top:212.95px;font-size:14px;color:#1a1a1a;-webkit-text-stroke:0;">k(1)=0 Eigenfrequency=7682.8 Hz</div>
<div class="a" style="left:1222px;top:212.82px;font-size:13.8px;color:#1a1a1a;-webkit-text-stroke:0;">Surface: Displacement magnitude (m)</div>
<svg class="a" style="left:0;top:0" width="1463" height="1010" viewBox="0 0 1463 1010"><defs><radialGradient id="gTop" gradientUnits="userSpaceOnUse" cx="1101" cy="474" r="235" gradientTransform="translate(1101 474) scale(1 0.5051) translate(-1101 -474)"><stop offset="0.0000" stop-color="#eafdee"/><stop offset="0.0936" stop-color="#d4f7de"/><stop offset="0.2043" stop-color="#aae3c0"/><stop offset="0.2979" stop-color="#88b8a0"/><stop offset="0.3489" stop-color="#8aa8a0"/><stop offset="0.4170" stop-color="#a2a0b6"/><stop offset="0.4894" stop-color="#ae90c8"/><stop offset="0.5957" stop-color="#a454c8"/><stop offset="0.7872" stop-color="#8c50c8"/><stop offset="1.0000" stop-color="#6a56c0"/></radialGradient><radialGradient id="gFloor" gradientUnits="userSpaceOnUse" cx="1108" cy="792" r="235" gradientTransform="translate(1108 792) scale(1 0.5051) translate(-1108 -792)"><stop offset="0.0000" stop-color="#eafdee"/><stop offset="0.0851" stop-color="#d4f7de"/><stop offset="0.1787" stop-color="#aae3c0"/><stop offset="0.2638" stop-color="#88b8a0"/><stop offset="0.3064" stop-color="#8aa8a0"/><stop offset="0.3660" stop-color="#a2a0b6"/><stop offset="0.4596" stop-color="#ae90c8"/><stop offset="0.5872" stop-color="#a454c8"/><stop offset="0.7872" stop-color="#8c50c8"/><stop offset="1.0000" stop-color="#6a56c0"/></radialGradient><radialGradient id="gTabR" gradientUnits="userSpaceOnUse" cx="1" cy="0.5" r="1.1" gradientTransform="translate(1 0.5) scale(1 0.6) translate(-1 -0.5)"><stop offset="0.0000" stop-color="#f0fff4"/><stop offset="0.1091" stop-color="#d8f8e2"/><stop offset="0.2273" stop-color="#b0e8c4"/><stop offset="0.3455" stop-color="#8cc8a6"/><stop offset="0.4364" stop-color="#88aa9c"/><stop offset="0.5455" stop-color="#a4a0b8"/><stop offset="0.6818" stop-color="#b088cc"/><stop offset="0.8364" stop-color="#a454c8"/><stop offset="1.0000" stop-color="#9450c8"/></radialGradient><radialGradient id="gTabL" gradientUnits="userSpaceOnUse" cx="0" cy="0.5" r="1.1" gradientTransform="translate(0 0.5) scale(1 0.6) translate(0 -0.5)"><stop offset="0.0000" stop-color="#f0fff4"/><stop offset="0.1091" stop-color="#d8f8e2"/><stop offset="0.2273" stop-color="#b0e8c4"/><stop offset="0.3455" stop-color="#8cc8a6"/><stop offset="0.4364" stop-color="#88aa9c"/><stop offset="0.5455" stop-color="#a4a0b8"/><stop offset="0.6818" stop-color="#b088cc"/><stop offset="0.8364" stop-color="#a454c8"/><stop offset="1.0000" stop-color="#9450c8"/></radialGradient><radialGradient id="gRWdark" gradientUnits="userSpaceOnUse" cx="1241.731" cy="665.7256118" r="90"><stop offset="0.0000" stop-color="#3400a8"/><stop offset="0.2500" stop-color="#4c00ac"/><stop offset="0.6000" stop-color="#6600b0"/><stop offset="1.0000" stop-color="#6c00b2"/></radialGradient><linearGradient id="gLWu" gradientUnits="userSpaceOnUse" x1="945.0" y1="535.0" x2="1009.0" y2="670.1"><stop offset="0.0000" stop-color="#5000ac"/><stop offset="0.3000" stop-color="#6c04b2"/><stop offset="0.6000" stop-color="#7408b4"/><stop offset="1.0000" stop-color="#7610b6"/></linearGradient><radialGradient id="gLWuD" gradientUnits="userSpaceOnUse" cx="1020.0" cy="597.0" r="50"><stop offset="0.0000" stop-color="rgba(38,0,160,0.9)"/><stop offset="0.4000" stop-color="rgba(38,0,160,0.6)"/><stop offset="1.0000" stop-color="rgba(38,0,160,0)"/></radialGradient><radialGradient id="gLWuT" gradientUnits="userSpaceOnUse" cx="879.0" cy="497.0" r="85"><stop offset="0.0000" stop-color="rgba(40,0,160,0.9)"/><stop offset="0.5000" stop-color="rgba(40,0,160,0.5)"/><stop offset="1.0000" stop-color="rgba(40,0,160,0)"/></radialGradient><linearGradient id="gLWl" gradientUnits="userSpaceOnUse" x1="1008.4" y1="690.8" x2="945.0" y2="873.0"><stop offset="0.0000" stop-color="#7004b4"/><stop offset="0.4500" stop-color="#6800b2"/><stop offset="0.8000" stop-color="#4c00aa"/><stop offset="1.0000" stop-color="#3000a2"/></linearGradient><radialGradient id="gLWlD" gradientUnits="userSpaceOnUse" cx="874.0" cy="825.0" r="110"><stop offset="0.0000" stop-color="rgba(40,0,160,0.9)"/><stop offset="1.0000" stop-color="rgba(40,0,160,0)"/></radialGradient><linearGradient id="gEnd" gradientUnits="userSpaceOnUse" x1="0" y1="0" x2="1" y2="0"><stop offset="0.0000" stop-color="#7040b0"/><stop offset="0.0200" stop-color="#7a50b0"/><stop offset="0.0800" stop-color="#8a70a8"/><stop offset="0.1600" stop-color="#508a68"/><stop offset="0.2300" stop-color="#5cb47c"/><stop offset="0.4000" stop-color="#b8f0c8"/><stop offset="0.4900" stop-color="#e8fff0"/><stop offset="0.6450" stop-color="#a8e8c0"/><stop offset="0.8000" stop-color="#48a068"/><stop offset="0.9400" stop-color="#8a70a8"/><stop offset="1.0000" stop-color="#6f2fae"/></linearGradient><linearGradient id="gFront" gradientUnits="userSpaceOnUse" x1="1016.0" y1="0" x2="1330.0" y2="0"><stop offset="0.0000" stop-color="#2a0690"/><stop offset="0.1200" stop-color="#3a0090"/><stop offset="0.2800" stop-color="#5a0a8e"/><stop offset="0.4600" stop-color="#5e3e8a"/><stop offset="0.5400" stop-color="#5e3e8a"/><stop offset="0.7200" stop-color="#580a8e"/><stop offset="0.8800" stop-color="#3a0090"/><stop offset="1.0000" stop-color="#2a0690"/></linearGradient><linearGradient id="gTLf" gradientUnits="userSpaceOnUse" x1="1016.0" y1="0" x2="1079.9595" y2="0"><stop offset="0.0000" stop-color="#6a2c9a"/><stop offset="0.5000" stop-color="#5a1890"/><stop offset="1.0000" stop-color="#440090"/></linearGradient><linearGradient id="gTRf" gradientUnits="userSpaceOnUse" x1="1266.0405" y1="0" x2="1330.0" y2="0"><stop offset="0.0000" stop-color="#440090"/><stop offset="0.5000" stop-color="#560890"/><stop offset="1.0000" stop-color="#5a1890"/></linearGradient></defs><g transform="matrix(63.959,-24.445,-142.000,-96.000,1266.041,646.935)"><rect x="0" y="0" width="1" height="1" fill="url(#gTabR)"/></g><polygon points="1266.04,646.93 1330.00,622.49 1188.00,526.49 1124.04,550.93" fill="none" stroke="#000" stroke-width="0.9" stroke-linejoin="round"/><polygon points="1044.92,888.95 1301.08,791.04 1159.08,695.04 902.92,792.95" fill="url(#gFloor)" stroke="#000" stroke-width="0.9" stroke-linejoin="round"/><polygon points="1301.08,495.04 1241.73,665.73 1099.73,569.73 1159.08,399.04" fill="url(#gRWdark)" stroke="#000" stroke-width="0.9" stroke-linejoin="round"/><polygon points="1241.73,665.73 1301.08,791.04 1159.08,695.04 1099.73,569.73" fill="url(#gRWdark)" stroke="#000" stroke-width="0.9" stroke-linejoin="round"/><polygon points="1016.00,583.00 1330.00,462.99 1188.00,366.99 874.00,487.00" fill="url(#gTop)" stroke="#000" stroke-width="0.9" stroke-linejoin="round"/><polygon points="1016.00,583.00 1079.96,718.05 937.96,622.05 874.00,487.00" fill="url(#gLWu)" stroke="#000" stroke-width="0.9" stroke-linejoin="round"/><polygon points="1016.00,583.00 1079.96,718.05 937.96,622.05 874.00,487.00" fill="url(#gLWuD)" stroke="none" stroke-width="0.9" stroke-linejoin="round"/><polygon points="1016.00,583.00 1079.96,718.05 937.96,622.05 874.00,487.00" fill="url(#gLWuT)" stroke="none" stroke-width="0.9" stroke-linejoin="round"/><polygon points="1016.00,583.00 1079.96,718.05 937.96,622.05 874.00,487.00" fill="none" stroke="#000" stroke-width="0.9"/><polygon points="1016.00,921.00 1079.36,738.78 937.36,642.78 874.00,825.00" fill="url(#gLWl)" stroke="#000" stroke-width="0.9" stroke-linejoin="round"/><polygon points="1016.00,921.00 1079.36,738.78 937.36,642.78 874.00,825.00" fill="url(#gLWlD)" stroke="none" stroke-width="0.9" stroke-linejoin="round"/><polygon points="1016.00,921.00 1079.36,738.78 937.36,642.78 874.00,825.00" fill="none" stroke="#000" stroke-width="0.9"/><g transform="matrix(63.959,-24.445,-142.000,-96.000,1016.000,742.500)"><rect x="0" y="0" width="1" height="1" fill="url(#gTabL)"/></g><polygon points="1016.00,742.50 1079.96,718.05 937.96,622.05 874.00,646.50" fill="none" stroke="#000" stroke-width="0.9" stroke-linejoin="round"/><g transform="matrix(-142.000,-96.000,0.000,-20.500,1016.000,763.000)"><rect x="0" y="0" width="1" height="1" fill="url(#gEnd)"/></g><polygon points="1016.00,763.00 874.00,667.00 874.00,646.50 1016.00,742.50" fill="none" stroke="#000" stroke-width="0.9" stroke-linejoin="round"/><path d="M1016.00,583.00 L1330.00,462.99 L1266.04,646.93 L1330.00,622.49 L1330.00,642.99 L1266.64,667.20 L1330.00,800.99 L1016.00,921.00 L1079.36,738.78 L1016.00,763.00 L1016.00,742.50 L1079.96,718.05Z M1044.92,592.95 L1301.08,495.04 L1241.73,665.73 L1301.08,791.04 L1044.92,888.95 L1104.27,718.26Z" fill="url(#gFront)" fill-rule="evenodd" stroke="#000" stroke-width="0.9" stroke-linejoin="round"/><polygon points="1016.00,742.50 1079.96,718.05 1079.36,738.78 1016.00,763.00" fill="url(#gTLf)" stroke="none" stroke-width="0.9" stroke-linejoin="round"/><polygon points="1266.04,646.93 1330.00,622.49 1330.00,642.99 1266.64,667.20" fill="url(#gTRf)" stroke="none" stroke-width="0.9" stroke-linejoin="round"/><path d="M1016.00,583.00 L1330.00,462.99 L1266.04,646.93 L1330.00,622.49 L1330.00,642.99 L1266.64,667.20 L1330.00,800.99 L1016.00,921.00 L1079.36,738.78 L1016.00,763.00 L1016.00,742.50 L1079.96,718.05Z M1044.92,592.95 L1301.08,495.04 L1241.73,665.73 L1301.08,791.04 L1044.92,888.95 L1104.27,718.26Z" fill="none" stroke="#000" stroke-width="0.9" stroke-linejoin="round"/></svg>
<svg class="a" style="left:775px;top:922px;" width="70" height="50" viewBox="0 0 70 50"><path d="M28.7 41.6 V22" stroke="#4a86c8" stroke-width="1.7"/><path d="M25.4 25.5 L28.7 16.2 L32 25.5 Z" fill="#4a86c8"/><path d="M28.7 41.6 L15.5 33.5" stroke="#5aa84a" stroke-width="1.7"/><path d="M11 29.8 L20.5 31.5 L15 37 Z" fill="#5aa84a"/><path d="M28.7 41.6 L46 34.5" stroke="#d8305a" stroke-width="1.7"/><path d="M53 32.5 L42.5 32 L45 38 Z" fill="#d8305a"/></svg>
<div class="a" style="left:802px;top:925.84px;font-size:12px;color:#111;">z</div>
<div class="a" style="left:778px;top:940.84px;font-size:12px;color:#111;">y</div>
<div class="a" style="left:831px;top:944.84px;font-size:12px;color:#111;">x</div>
</body></html>
